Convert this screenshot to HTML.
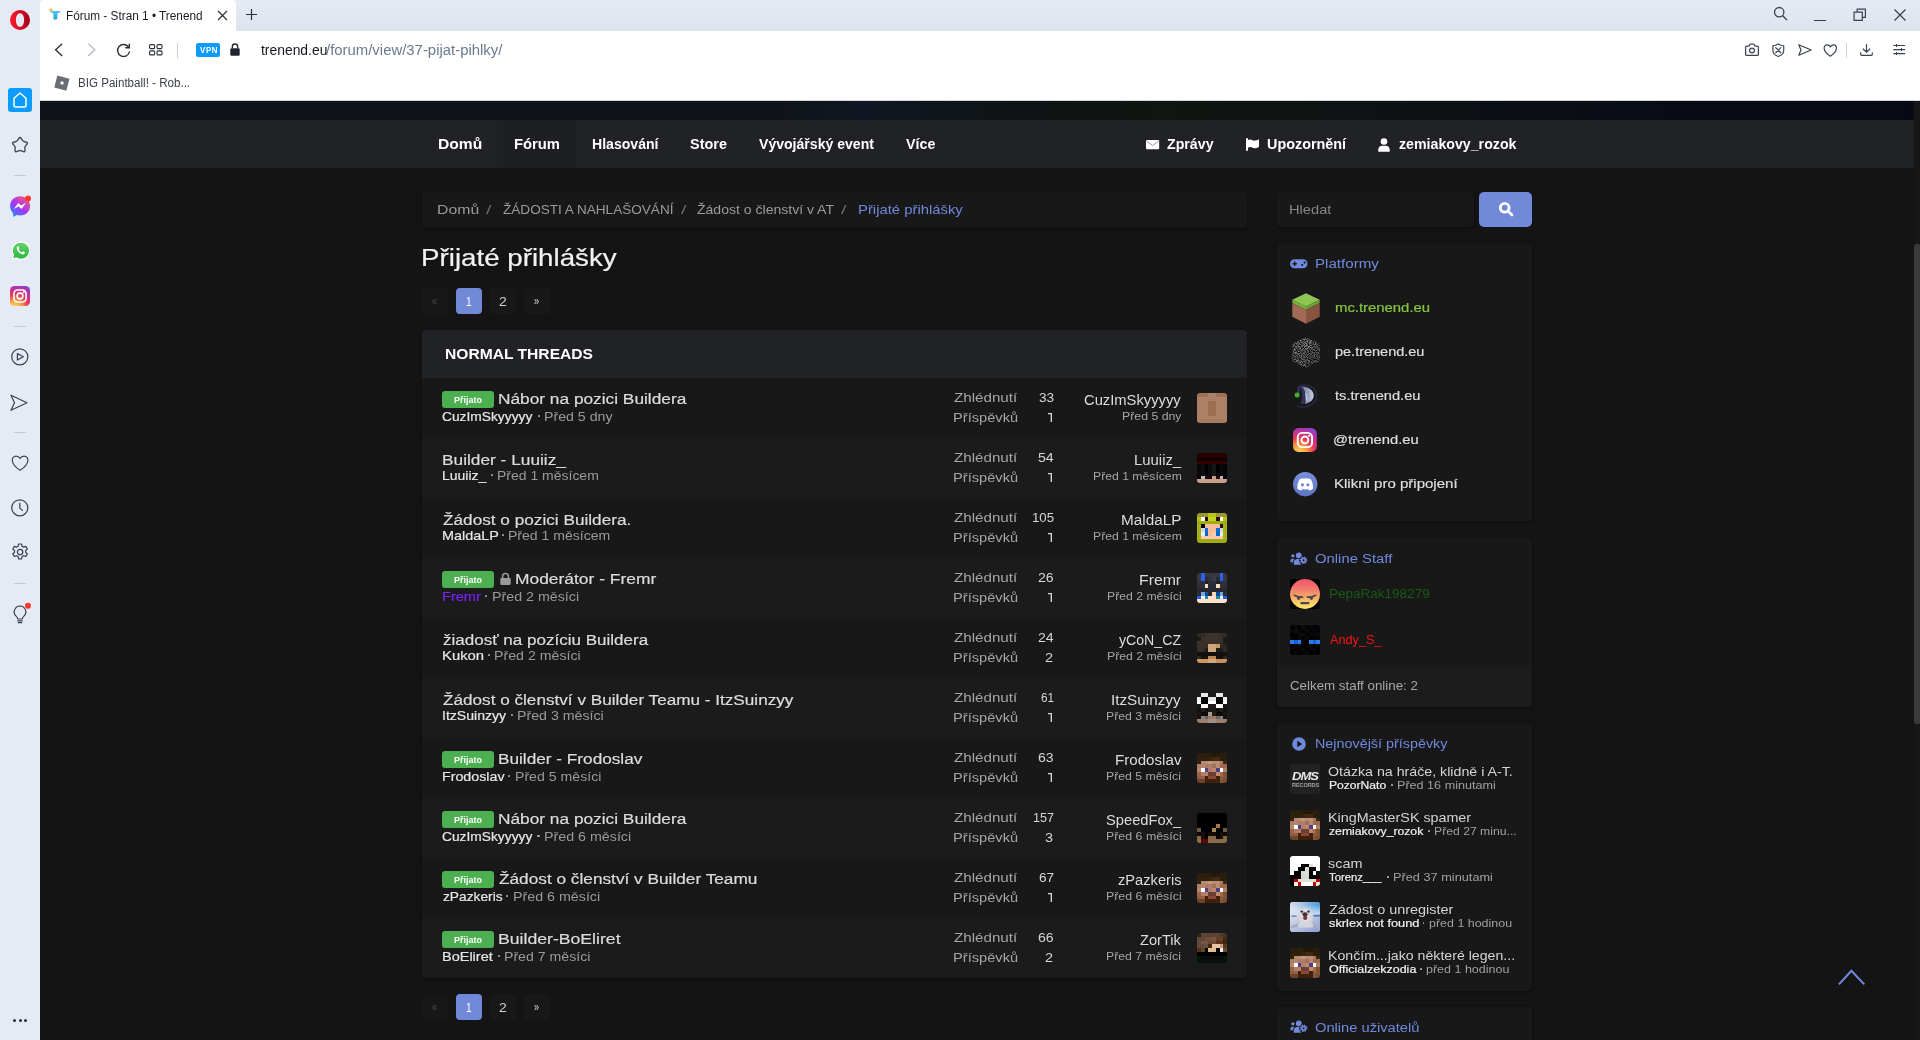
<!DOCTYPE html>
<html lang="cs"><head><meta charset="utf-8"><title>Fórum - Stran 1 • Trenend</title>
<style>
html,body{margin:0;padding:0}
body{width:1920px;height:1040px;overflow:hidden;position:relative;background:#141414;font-family:"Liberation Sans",sans-serif}
.a{position:absolute}
.t{position:absolute;white-space:pre;display:block;transform-origin:0 50%}
svg{position:absolute;overflow:visible}
.av{position:absolute;width:30px;height:30px;border-radius:3px;overflow:hidden}
.pg{position:absolute;width:26px;height:26px;border-radius:4px;background:#181818}
.row{position:absolute;left:422px;width:825px;height:60px}
.badge{position:absolute;left:442px;width:52px;height:16.5px;border-radius:3px;background:#4caf50}
.box{position:absolute;left:1277px;width:255px;background:#181818;border-radius:4px;box-shadow:0 1px 3px rgba(0,0,0,.4)}

</style></head>
<body>
<div class="a" style="left:0;top:0;width:1920px;height:31px;background:linear-gradient(#e4ebf4,#dde4ee)"></div>
<div class="a" style="left:40px;top:31px;width:1880px;height:69px;background:#fff"></div>
<div class="a" style="left:40px;top:100px;width:1880px;height:1px;background:#cfd6e0"></div>
<div class="a" style="left:0;top:0;width:40px;height:1040px;background:#e4ebf5"></div>
<div class="a" style="left:40px;top:0;width:196px;height:31px;background:#fff;border-radius:4px 4px 0 0"></div>
<svg style="left:10px;top:10px" width="20" height="20" viewBox="0 0 20 20"><defs><linearGradient id="og" x1="0" y1="0" x2="1" y2="0"><stop offset="0" stop-color="#ff1b2d"/><stop offset="1" stop-color="#a70014"/></linearGradient></defs><path fill-rule="evenodd" fill="url(#og)" d="M10 0a10 10 0 1 0 0 20a10 10 0 1 0 0-20zM10 3.2c2.6 0 4.1 3 4.1 6.8s-1.5 6.8-4.1 6.8s-4.1-3-4.1-6.8s1.500-6.800 4.100-6.800z"/></svg>
<svg style="left:48px;top:8px" width="14" height="13" viewBox="0 0 14 13"><defs><linearGradient id="fv" x1="0" y1="0" x2="0" y2="1"><stop offset="0" stop-color="#4fc6f5"/><stop offset="1" stop-color="#2b9fd8"/></linearGradient></defs><path d="M1.600 3.100L12.800 2.900C11.800 4.300 10.600 5.100 9.400 5.300L9.300 11.100L7.300 11.800L5.400 11V5.400C4 5.200 2.600 4.400 1.600 3.100z" fill="url(#fv)"/><circle cx="3" cy="1.900" r="1.700" fill="#fbb452" opacity=".92"/></svg>
<svg style="left:217px;top:10px" width="11" height="11" viewBox="0 0 11 11"><path d="M1 1l9 9M10 1l-9 9" stroke="#2b303b" stroke-width="1.2" fill="none"/></svg>
<svg style="left:246px;top:9px" width="11" height="11" viewBox="0 0 11 11"><path d="M5.500 0v11M0 5.500h11" stroke="#2b303b" stroke-width="1.2" fill="none"/></svg>
<svg style="left:1773px;top:6px" width="16" height="16" viewBox="0 0 16 16"><circle cx="6.200" cy="6.200" r="4.700" stroke="#3b4250" stroke-width="1.300" fill="none"/><path d="M9.700 9.700l4.300 4.300" stroke="#3b4250" stroke-width="1.300"/></svg>
<div class="a" style="left:1814px;top:19.500px;width:12px;height:1.300px;background:#3b4250"></div>
<svg style="left:1853px;top:8px" width="14" height="14" viewBox="0 0 14 14"><path d="M1.100 4.200h8.200v8.200h-8.200zM4.200 4v-2.900h8.200v8.200h-2.900" stroke="#3b4250" stroke-width="1.200" fill="none"/></svg>
<svg style="left:1894px;top:9px" width="12" height="12" viewBox="0 0 12 12"><path d="M0.500 0.500l11 11M11.500 0.500l-11 11" stroke="#3b4250" stroke-width="1.300" fill="none"/></svg>
<svg style="left:54px;top:43px" width="10" height="14" viewBox="0 0 10 14"><path d="M8.200 0.700l-6.600 6.100l6.600 6.100" stroke="#2b303b" stroke-width="1.400" fill="none"/></svg>
<svg style="left:87px;top:43px" width="10" height="14" viewBox="0 0 10 14"><path d="M1.200 0.700l6.600 6.100l-6.600 6.100" stroke="#b9bec8" stroke-width="1.400" fill="none"/></svg>
<svg style="left:116px;top:43px" width="15" height="15" viewBox="0 0 15 15"><path d="M12.600 4.200A6 6 0 1 0 13.500 8.500" stroke="#2b303b" stroke-width="1.400" fill="none"/><path d="M13.300 0.800v4h-4" stroke="#2b303b" stroke-width="1.400" fill="none"/></svg>
<svg style="left:148.500px;top:44px" width="14" height="12" viewBox="0 0 14 12"><g stroke="#2b303b" stroke-width="1.100" fill="none"><rect x="0.600" y="0.600" width="5" height="4" rx="1"/><rect x="8" y="0.600" width="5" height="4" rx="1"/><rect x="0.600" y="6.900" width="5" height="4" rx="1"/><rect x="8" y="6.900" width="5" height="4" rx="1"/></g></svg>
<div class="a" style="left:177px;top:43px;width:1px;height:15px;background:#c9ced6"></div>
<div class="a" style="left:196px;top:43px;width:24px;height:14px;background:#0c9bff;border-radius:2px"></div>
<svg style="left:230px;top:43px" width="10" height="13" viewBox="0 0 10 13"><path d="M2.300 5.500v-1.800a2.700 2.700 0 0 1 5.400 0v1.800" stroke="#20242e" stroke-width="1.300" fill="none"/><rect x="0.300" y="5.300" width="9.400" height="7.400" rx="1.200" fill="#20242e"/></svg>
<svg style="left:1744.800px;top:43px" width="14" height="13" viewBox="0 0 14 13"><path d="M1.600 3.200h2.300l1-1.600c.2-.3.400-.4.700-.4h2.800c.3 0 .5.100.7.400l1 1.600h2.300c.6 0 1 .4 1 1v7.200c0 .6-.4 1-1 1h-10.800c-.6 0-1-.4-1-1v-7.200c0-.6.400-1 1-1z" stroke="#3b4250" stroke-width="1.200" fill="none" stroke-linejoin="round" stroke-linecap="round"/><circle cx="7" cy="7.500" r="2.400" stroke="#3b4250" stroke-width="1.200" fill="none" stroke-linejoin="round" stroke-linecap="round"/></svg>
<svg style="left:1771.700px;top:42.800px" width="12.600" height="14.400" viewBox="0 0 13 14.400"><path d="M6.500 0.700c1.600 1 3.600 1.700 5.600 1.900v4.800c0 3-2.300 5-5.600 6.300c-3.300-1.300-5.600-3.300-5.600-6.300v-4.800c2-.2 4-.9 5.600-1.900z" stroke="#3b4250" stroke-width="1.200" fill="none" stroke-linejoin="round" stroke-linecap="round"/><path d="M3.900 4.600l5.200 5.200M9.100 4.600l-5.200 5.200" stroke="#3b4250" stroke-width="1.200" fill="none" stroke-linejoin="round" stroke-linecap="round"/></svg>
<svg style="left:1797.500px;top:44px" width="14" height="12" viewBox="0 0 14 12"><path d="M0.800 0.800l12.400 5.200l-12.400 5.200l2.200-5.200z" stroke="#3b4250" stroke-width="1.200" fill="none" stroke-linejoin="round" stroke-linecap="round"/></svg>
<svg style="left:1822.700px;top:44px" width="14.600" height="13" viewBox="0 0 14.600 13"><path d="M7.300 12.200c-8.400-5.200-6.900-11.400-3.200-11.400c1.500 0 2.600 1 3.200 2.100c.6-1.100 1.700-2.100 3.200-2.100c3.700 0 5.200 6.200-3.200 11.400z" stroke="#3b4250" stroke-width="1.200" fill="none" stroke-linejoin="round" stroke-linecap="round"/></svg>
<div class="a" style="left:1846px;top:43px;width:1px;height:15px;background:#cfd2d6"></div>
<svg style="left:1860px;top:44px" width="13" height="12" viewBox="0 0 13 12"><path d="M6.500 0.500v7.700M3.200 5l3.300 3.200l3.300-3.200M0.700 8.800v1.500c0 .6.400 1 1 1h9.600c.6 0 1-.4 1-1v-1.500" stroke="#3b4250" stroke-width="1.200" fill="none" stroke-linejoin="round" stroke-linecap="round"/></svg>
<svg style="left:1893px;top:43px" width="13" height="13" viewBox="0 0 13 13"><path d="M0.300 2.500h11.800M0.300 6.600h11.800M0.300 10.600h11.800M3.500 1v3M8.500 5.100v3M3.500 9.100v3" stroke="#3b4250" stroke-width="1.050" fill="none"/></svg>
<svg style="left:54px;top:75px" width="16" height="16" viewBox="0 0 16 16"><path d="M3.300 0.500l12.200 3.200l-3.200 12l-12-3.200z" fill="#6b6e74"/><path d="M7 6.200l2.800.7l-.7 2.800l-2.800-.7z" fill="#fff"/></svg>
<div class="a" style="left:8px;top:88px;width:24px;height:24px;background:#0c9bff;border-radius:3px"></div>
<svg style="left:13px;top:92px" width="14" height="16" viewBox="0 0 14 16"><path d="M1 6.200l6-5.200l6 5.200v7.300a1.500 1.500 0 0 1-1.500 1.500h-9a1.500 1.500 0 0 1-1.500-1.500z" stroke="#fff" stroke-width="1.500" fill="none" stroke-linejoin="round"/></svg>
<svg style="left:10.900px;top:135.700px" width="18" height="18" viewBox="0 0 18 18"><path d="M7.69 2.65Q9.00 0.40 10.31 2.65L11.07 3.95Q11.88 5.34 13.44 5.68L14.92 6.00Q17.46 6.55 15.73 8.49L14.73 9.62Q13.66 10.81 13.82 12.41L13.97 13.91Q14.23 16.50 11.85 15.45L10.46 14.84Q9.00 14.20 7.54 14.84L6.15 15.45Q3.77 16.50 4.03 13.91L4.18 12.41Q4.34 10.81 3.27 9.62L2.27 8.49Q0.54 6.55 3.08 6.00L4.56 5.68Q6.12 5.34 6.93 3.95z" stroke="#474e5a" stroke-width="1.450" fill="none" stroke-linejoin="round"/></svg>
<div class="a" style="left:14px;top:175px;width:12px;height:1px;background:#c3cad4"></div>
<div class="a" style="left:14px;top:326px;width:12px;height:1px;background:#c3cad4"></div>
<div class="a" style="left:14px;top:432px;width:12px;height:1px;background:#c3cad4"></div>
<div class="a" style="left:14px;top:583px;width:12px;height:1px;background:#c3cad4"></div>
<svg style="left:10px;top:194.500px" width="21" height="22.500" viewBox="0 0 21 22.500"><defs><linearGradient id="mg" x1="0.150" y1="1" x2="0.900" y2="0"><stop offset="0" stop-color="#1a8cff"/><stop offset=".45" stop-color="#a436f5"/><stop offset="1" stop-color="#ff5c72"/></linearGradient></defs><path d="M10.100 1.300c-5.700 0-10 4.200-10 9.800c0 2.900 1.200 5.400 3.100 7.100v3.800l3.400-1.900c1.100.3 2.300.5 3.500.5c5.700 0 10-4.200 10-9.500s-4.300-9.800-10-9.800z" fill="url(#mg)"/><path d="M3.900 14l4.300-6.100l3 2.500l4.800-2.700l-4.400 6.200l-3-2.500z" fill="#fff"/><circle cx="18" cy="3.500" r="3" fill="#ff3529"/></svg>
<svg style="left:10.500px;top:241.300px" width="19.500" height="19.500" viewBox="0 0 19 19"><defs><linearGradient id="wg" x1="0" y1="0" x2="0" y2="1"><stop offset="0" stop-color="#62d26b"/><stop offset="1" stop-color="#2cb741"/></linearGradient></defs><path d="M9.600 0.500a8.900 8.900 0 0 0-7.700 13.400l-1.400 4.600l4.800-1.300a8.900 8.900 0 1 0 4.300-16.700z" fill="#fff"/><path d="M9.600 1.600a7.800 7.800 0 0 0-6.500 12.100l-.9 3l3.100-.9a7.800 7.800 0 1 0 4.300-14.200z" fill="url(#wg)"/><path d="M6.600 5.200c.3-.3.900-.2 1 .2l.6 1.500c.1.300 0 .5-.2.700l-.5.600c.7 1.300 1.600 2.200 3 2.900l.7-.7c.2-.2.500-.2.700-.1l1.400.7c.4.200.4.700.2 1c-.6 1-1.700 1.300-2.800.9c-2.400-.8-4.200-2.600-5-5c-.3-1 0-2 .9-2.700z" fill="#fff"/></svg>
<svg style="left:10px;top:286px" width="20" height="20" viewBox="0 0 20 20"><defs><radialGradient id="iga" cx="0.250" cy="1.050" r="1.300"><stop offset="0" stop-color="#ffd676"/><stop offset=".25" stop-color="#f7a23c"/><stop offset=".5" stop-color="#e8365a"/><stop offset=".75" stop-color="#b832a8"/><stop offset="1" stop-color="#5b4fe0"/></radialGradient></defs><rect width="20" height="20" rx="4.500" fill="url(#iga)"/><rect x="4" y="4" width="12" height="12" rx="3.500" stroke="#fff" stroke-width="1.600" fill="none"/><circle cx="10" cy="10" r="2.900" stroke="#fff" stroke-width="1.600" fill="none"/><circle cx="13.700" cy="6.300" r="1" fill="#fff"/></svg>
<svg style="left:10.600px;top:347.600px" width="17.600" height="17.600" viewBox="0 0 17 17"><circle cx="8.500" cy="8.500" r="7.750" stroke="#3b4250" stroke-width="1.200" fill="none" stroke-linejoin="round" stroke-linecap="round" stroke-width="1.300"/><path d="M6.200 5.400l5.700 3.100l-5.700 3.100z" stroke="#3b4250" stroke-width="1.200" fill="none" stroke-linejoin="round" stroke-linecap="round" stroke-width="1.300"/></svg>
<svg style="left:10.400px;top:393.500px" width="18" height="17.600" viewBox="0 0 18 17"><path d="M1 1l16 7.500l-16 7.500l3.500-7.500z" stroke="#3b4250" stroke-width="1.200" fill="none" stroke-linejoin="round" stroke-linecap="round" stroke-width="1.300"/></svg>
<svg style="left:10.500px;top:454.800px" width="18.200" height="16.200" viewBox="0 0 18 16"><path d="M9 15c-10.500-6.300-8.700-14-4-14c2 0 3.300 1.200 4 2.500c.7-1.300 2-2.500 4-2.500c4.700 0 6.500 7.700-4 14z" stroke="#3b4250" stroke-width="1.200" fill="none" stroke-linejoin="round" stroke-linecap="round" stroke-width="1.300"/></svg>
<svg style="left:10.700px;top:498.800px" width="17.600" height="17.600" viewBox="0 0 17 17"><circle cx="8.500" cy="8.500" r="7.750" stroke="#3b4250" stroke-width="1.200" fill="none" stroke-linejoin="round" stroke-linecap="round" stroke-width="1.300"/><path d="M8.500 4v4.800l2.500 2.200" stroke="#3b4250" stroke-width="1.200" fill="none" stroke-linejoin="round" stroke-linecap="round" stroke-width="1.300"/></svg>
<svg style="left:10.500px;top:543.300px" width="18.200" height="18.200" viewBox="0 0 18 18"><path d="M7.500 1h3l.5 2.300l1.500.8l2.200-.8l1.500 2.600l-1.700 1.600v1.700l1.700 1.600l-1.500 2.600l-2.200-.8l-1.500.8l-.5 2.300h-3l-.5-2.300l-1.500-.8l-2.200.8l-1.500-2.600l1.700-1.600v-1.700l-1.700-1.600l1.500-2.600l2.200.8l1.500-.8z" stroke="#3b4250" stroke-width="1.200" fill="none" stroke-linejoin="round" stroke-linecap="round" stroke-width="1.250"/><circle cx="9" cy="9" r="2.700" stroke="#3b4250" stroke-width="1.200" fill="none" stroke-linejoin="round" stroke-linecap="round" stroke-width="1.250"/></svg>
<svg style="left:12.700px;top:602px" width="19" height="23" viewBox="0 0 19 23"><path d="M7 4a5.900 5.900 0 0 0-3.700 10.400c.9.800 1.400 1.700 1.400 2.600h4.600c0-.9.500-1.800 1.400-2.600a5.900 5.900 0 0 0-3.700-10.400z" stroke="#3b4250" stroke-width="1.200" fill="none" stroke-linejoin="round" stroke-linecap="round" stroke-width="1.300"/><path d="M4.800 18.900h4.400M5.300 20.700h3.400" stroke="#3b4250" stroke-width="1.200" fill="none" stroke-linejoin="round" stroke-linecap="round" stroke-width="1.300"/><circle cx="15" cy="3.800" r="3" fill="#ff3529"/></svg>
<div class="a" style="left:12.6px;top:1018.500px;width:3px;height:3px;border-radius:2px;background:#2b303b"></div>
<div class="a" style="left:18.5px;top:1018.500px;width:3px;height:3px;border-radius:2px;background:#2b303b"></div>
<div class="a" style="left:24.4px;top:1018.500px;width:3px;height:3px;border-radius:2px;background:#2b303b"></div>
<div class="a" style="left:40px;top:101px;width:1874px;height:19px;background:linear-gradient(90deg,#0f1216 0%,#0f1216 38%,#101722 44%,#0f1314 52%,#101511 60%,#0d1114 75%,#090c15 85%,#070a15 100%)"></div>
<div class="a" style="left:40px;top:120px;width:1874px;height:48px;background:#212226"></div>
<div class="a" style="left:497px;top:120px;width:79px;height:48px;background:#1e1f23"></div>
<div class="a" style="left:1914px;top:101px;width:6px;height:939px;background:#161616"></div>
<div class="a" style="left:1914px;top:244px;width:7px;height:480px;background:#3a3a3a;border-radius:3px"></div>
<svg style="left:1145.500px;top:140px" width="13.200" height="9.200" viewBox="0 0 13.200 9.200"><rect width="13.200" height="9.200" rx="1" fill="#fff"/><path d="M0.600 1.200l6 4.300l6-4.300" stroke="#6a6470" stroke-width=".7" fill="none"/></svg>
<svg style="left:1245.700px;top:138.200px" width="13" height="13" viewBox="0 0 13 13"><path d="M0 1.100a1 1 0 0 1 2 0v11.700h-2z" fill="#fff"/><path d="M1.800 2.300c1.800-1.100 3.200-.7 4.700-.1s3 .8 6.500-.9v7.600c-3.300 1.600-4.900 1.400-6.400.8s-2.900-1-4.800 0z" fill="#fff"/></svg>
<svg style="left:1378px;top:137.500px" width="12" height="14" viewBox="0 0 12 14"><circle cx="6" cy="3.500" r="3.300" fill="#fff"/><path d="M0.300 13.700v-2.200c0-2.300 1.800-3.800 3.700-3.800h4c1.900 0 3.700 1.500 3.700 3.800v2.200z" fill="#fff"/></svg>
<div class="a" style="left:422px;top:192px;width:825px;height:36px;background:#181818;border-radius:4px;box-shadow:0 1px 3px rgba(0,0,0,.4)"></div>
<div class="pg" style="left:422px;top:288px;background:#171717"></div>
<div class="pg" style="left:456px;top:288px;background:#7289da"></div>
<div class="pg" style="left:490px;top:288px;background:#181818"></div>
<div class="pg" style="left:524px;top:288px;background:#181818"></div>
<div class="pg" style="left:422px;top:994px;background:#171717"></div>
<div class="pg" style="left:456px;top:994px;background:#7289da"></div>
<div class="pg" style="left:490px;top:994px;background:#181818"></div>
<div class="pg" style="left:524px;top:994px;background:#181818"></div>
<div class="a" style="left:422px;top:330px;width:825px;height:648px;border-radius:4px;box-shadow:0 1px 3px rgba(0,0,0,.4)"></div>
<div class="a" style="left:422px;top:330px;width:825px;height:48px;background:#212226;border-radius:4px 4px 0 0"></div>
<div class="row" style="top:378px;background:#181818"></div>
<div class="badge" style="top:391.2px"></div>
<div class="a" style="left:537.5px;top:415.2px;width:2.3px;height:2.3px;background:#9a9a9a;border-radius:.6px"></div>
<svg style="left:1048.400px;top:413px" width="4" height="9" viewBox="0 0 4 9"><path d="M0 0h4v9h-1.350v-7.800h-2.650z" fill="#d6d6d6"/></svg>
<div class="av" style="left:1197px;top:393px"><svg style="left:0;top:0" width="30" height="30" viewBox="0 0 8 8" shape-rendering="crispEdges" preserveAspectRatio="none"><rect x="0" y="0" width="3" height="1" fill="#a27052"/><rect x="3" y="0" width="2" height="1" fill="#ae8268"/><rect x="5" y="0" width="3" height="1" fill="#a27052"/><rect x="0" y="1" width="8" height="1" fill="#ab8066"/><rect x="0" y="2" width="3" height="1" fill="#ab8066"/><rect x="3" y="2" width="2" height="1" fill="#9e6e52"/><rect x="5" y="2" width="3" height="1" fill="#ab8066"/><rect x="0" y="3" width="3" height="1" fill="#ab8066"/><rect x="3" y="3" width="2" height="1" fill="#9e6e52"/><rect x="5" y="3" width="3" height="1" fill="#ab8066"/><rect x="0" y="4" width="3" height="1" fill="#ab8066"/><rect x="3" y="4" width="2" height="1" fill="#9e6e52"/><rect x="5" y="4" width="3" height="1" fill="#ab8066"/><rect x="0" y="5" width="3" height="1" fill="#ab8066"/><rect x="3" y="5" width="2" height="1" fill="#9e6e52"/><rect x="5" y="5" width="3" height="1" fill="#ab8066"/><rect x="0" y="6" width="8" height="1" fill="#ab8066"/><rect x="0" y="7" width="8" height="1" fill="#a87a5e"/></svg></div>
<div class="row" style="top:438px;background:#1b1b1b"></div>
<div class="a" style="left:490.8px;top:474.2px;width:2.3px;height:2.3px;background:#9a9a9a;border-radius:.6px"></div>
<svg style="left:1048.400px;top:473px" width="4" height="9" viewBox="0 0 4 9"><path d="M0 0h4v9h-1.350v-7.800h-2.650z" fill="#d6d6d6"/></svg>
<div class="av" style="left:1197px;top:453px"><svg style="left:0;top:0" width="30" height="30" viewBox="0 0 8 8" shape-rendering="crispEdges" preserveAspectRatio="none"><rect x="0" y="0" width="8" height="1" fill="#2b0000"/><rect x="0" y="1" width="8" height="1" fill="#140000"/><rect x="0" y="2" width="8" height="1" fill="#330000"/><rect x="0" y="3" width="1" height="1" fill="#070707"/><rect x="1" y="3" width="1" height="1" fill="#0c0c0c"/><rect x="2" y="3" width="1" height="1" fill="#000000"/><rect x="3" y="3" width="1" height="1" fill="#0a0a0a"/><rect x="4" y="3" width="1" height="1" fill="#151515"/><rect x="5" y="3" width="1" height="1" fill="#000000"/><rect x="6" y="3" width="1" height="1" fill="#0a0a0a"/><rect x="7" y="3" width="1" height="1" fill="#050505"/><rect x="0" y="4" width="1" height="1" fill="#070707"/><rect x="1" y="4" width="1" height="1" fill="#0c0c0c"/><rect x="2" y="4" width="1" height="1" fill="#000000"/><rect x="3" y="4" width="1" height="1" fill="#0a0a0a"/><rect x="4" y="4" width="1" height="1" fill="#151515"/><rect x="5" y="4" width="1" height="1" fill="#000000"/><rect x="6" y="4" width="1" height="1" fill="#0a0a0a"/><rect x="7" y="4" width="1" height="1" fill="#050505"/><rect x="0" y="5" width="1" height="1" fill="#070707"/><rect x="1" y="5" width="1" height="1" fill="#0c0c0c"/><rect x="2" y="5" width="1" height="1" fill="#000000"/><rect x="3" y="5" width="1" height="1" fill="#0a0a0a"/><rect x="4" y="5" width="1" height="1" fill="#151515"/><rect x="5" y="5" width="1" height="1" fill="#000000"/><rect x="6" y="5" width="1" height="1" fill="#0a0a0a"/><rect x="7" y="5" width="1" height="1" fill="#050505"/><rect x="0" y="6" width="1" height="1" fill="#070707"/><rect x="1" y="6" width="1" height="1" fill="#b8bcc0"/><rect x="2" y="6" width="1" height="1" fill="#2a0008"/><rect x="3" y="6" width="1" height="1" fill="#0a0a0a"/><rect x="4" y="6" width="1" height="1" fill="#c49c84"/><rect x="5" y="6" width="1" height="1" fill="#2a0008"/><rect x="6" y="6" width="1" height="1" fill="#b8bcc0"/><rect x="7" y="6" width="1" height="1" fill="#050505"/><rect x="0" y="7" width="8" height="1" fill="#c8a088"/></svg></div>
<div class="row" style="top:498px;background:#181818"></div>
<div class="a" style="left:501.7px;top:534.2px;width:2.3px;height:2.3px;background:#9a9a9a;border-radius:.6px"></div>
<svg style="left:1048.400px;top:533px" width="4" height="9" viewBox="0 0 4 9"><path d="M0 0h4v9h-1.350v-7.800h-2.650z" fill="#d6d6d6"/></svg>
<div class="av" style="left:1197px;top:513px"><svg style="left:0;top:0" width="30" height="30" viewBox="0 0 8 8" shape-rendering="crispEdges" preserveAspectRatio="none"><rect x="0" y="0" width="3" height="1" fill="#9a9a30"/><rect x="3" y="0" width="2" height="1" fill="#b8c41c"/><rect x="5" y="0" width="3" height="1" fill="#9a9a30"/><rect x="0" y="1" width="1" height="1" fill="#b4c018"/><rect x="1" y="1" width="1" height="1" fill="#ffffff"/><rect x="2" y="1" width="1" height="1" fill="#2a0800"/><rect x="3" y="1" width="2" height="1" fill="#c4d420"/><rect x="5" y="1" width="1" height="1" fill="#2a0800"/><rect x="6" y="1" width="1" height="1" fill="#ffffff"/><rect x="7" y="1" width="1" height="1" fill="#b4c018"/><rect x="0" y="2" width="8" height="1" fill="#a0ac14"/><rect x="0" y="3" width="1" height="1" fill="#a4b016"/><rect x="1" y="3" width="1" height="1" fill="#000000"/><rect x="2" y="3" width="4" height="1" fill="#fcbc98"/><rect x="6" y="3" width="1" height="1" fill="#1e1414"/><rect x="7" y="3" width="1" height="1" fill="#a4b016"/><rect x="0" y="4" width="1" height="1" fill="#a4b016"/><rect x="1" y="4" width="1" height="1" fill="#d8d8dc"/><rect x="2" y="4" width="1" height="1" fill="#0a70d8"/><rect x="3" y="4" width="2" height="1" fill="#fcbc98"/><rect x="5" y="4" width="1" height="1" fill="#0a70d8"/><rect x="6" y="4" width="1" height="1" fill="#d8d8dc"/><rect x="7" y="4" width="1" height="1" fill="#a4b016"/><rect x="0" y="5" width="1" height="1" fill="#a4b016"/><rect x="1" y="5" width="1" height="1" fill="#ececf0"/><rect x="2" y="5" width="1" height="1" fill="#0a68cc"/><rect x="3" y="5" width="1" height="1" fill="#fcbc98"/><rect x="4" y="5" width="1" height="1" fill="#f8ccb0"/><rect x="5" y="5" width="1" height="1" fill="#0a68cc"/><rect x="6" y="5" width="1" height="1" fill="#ececf0"/><rect x="7" y="5" width="1" height="1" fill="#a4b016"/><rect x="0" y="6" width="1" height="1" fill="#a4b016"/><rect x="1" y="6" width="6" height="1" fill="#f8c8b0"/><rect x="7" y="6" width="1" height="1" fill="#a4b016"/><rect x="0" y="7" width="8" height="1" fill="#a0ac14"/></svg></div>
<div class="row" style="top:558px;background:#1b1b1b"></div>
<div class="badge" style="top:571.2px"></div>
<svg style="left:499.500px;top:572.5px" width="11" height="12" viewBox="0 0 11 12"><path d="M2.600 5v-1.600a2.900 2.900 0 0 1 5.800 0v1.600" stroke="#9a9a9a" stroke-width="1.500" fill="none"/><rect x="0.300" y="5" width="10.400" height="7" rx="1.200" fill="#9a9a9a"/></svg>
<div class="a" style="left:485.0px;top:595.2px;width:2.3px;height:2.3px;background:#9a9a9a;border-radius:.6px"></div>
<svg style="left:1048.400px;top:593px" width="4" height="9" viewBox="0 0 4 9"><path d="M0 0h4v9h-1.350v-7.800h-2.650z" fill="#d6d6d6"/></svg>
<div class="av" style="left:1197px;top:573px"><svg style="left:0;top:0" width="30" height="30" viewBox="0 0 8 8" shape-rendering="crispEdges" preserveAspectRatio="none"><rect x="0" y="0" width="1" height="1" fill="#38383e"/><rect x="1" y="0" width="1" height="1" fill="#2860f0"/><rect x="2" y="0" width="4" height="1" fill="#38363e"/><rect x="6" y="0" width="1" height="1" fill="#2860f0"/><rect x="7" y="0" width="1" height="1" fill="#38383e"/><rect x="0" y="1" width="1" height="1" fill="#36383f"/><rect x="1" y="1" width="1" height="1" fill="#2860f0"/><rect x="2" y="1" width="1" height="1" fill="#2a2a36"/><rect x="3" y="1" width="1" height="1" fill="#30323c"/><rect x="4" y="1" width="1" height="1" fill="#383c44"/><rect x="5" y="1" width="1" height="1" fill="#2a2a36"/><rect x="6" y="1" width="1" height="1" fill="#2860f0"/><rect x="7" y="1" width="1" height="1" fill="#383a42"/><rect x="0" y="2" width="2" height="1" fill="#2c2e3a"/><rect x="2" y="2" width="1" height="1" fill="#22222e"/><rect x="3" y="2" width="2" height="1" fill="#2c2e3a"/><rect x="5" y="2" width="1" height="1" fill="#22222e"/><rect x="6" y="2" width="2" height="1" fill="#2c2e3a"/><rect x="0" y="3" width="2" height="1" fill="#2c2e3a"/><rect x="2" y="3" width="1" height="1" fill="#fcdcc0"/><rect x="3" y="3" width="2" height="1" fill="#2a2c38"/><rect x="5" y="3" width="1" height="1" fill="#fcdcc0"/><rect x="6" y="3" width="2" height="1" fill="#2c2e3a"/><rect x="0" y="4" width="8" height="1" fill="#262832"/><rect x="0" y="5" width="1" height="1" fill="#2a2c38"/><rect x="1" y="5" width="1" height="1" fill="#78a8d8"/><rect x="2" y="5" width="1" height="1" fill="#0c4ca0"/><rect x="3" y="5" width="1" height="1" fill="#242630"/><rect x="4" y="5" width="1" height="1" fill="#f8d4b8"/><rect x="5" y="5" width="1" height="1" fill="#0c4ca0"/><rect x="6" y="5" width="1" height="1" fill="#78a8d8"/><rect x="7" y="5" width="1" height="1" fill="#2a2c38"/><rect x="0" y="6" width="1" height="1" fill="#2858f0"/><rect x="1" y="6" width="1" height="1" fill="#f8f8ff"/><rect x="2" y="6" width="1" height="1" fill="#0890a8"/><rect x="3" y="6" width="2" height="1" fill="#fce0c8"/><rect x="5" y="6" width="1" height="1" fill="#0890a8"/><rect x="6" y="6" width="1" height="1" fill="#f8f8ff"/><rect x="7" y="6" width="1" height="1" fill="#2858f0"/><rect x="0" y="7" width="8" height="1" fill="#fce0c8"/></svg></div>
<div class="row" style="top:618px;background:#181818"></div>
<div class="a" style="left:487.8px;top:654.2px;width:2.3px;height:2.3px;background:#9a9a9a;border-radius:.6px"></div>
<div class="av" style="left:1197px;top:633px"><svg style="left:0;top:0" width="30" height="30" viewBox="0 0 8 8" shape-rendering="crispEdges" preserveAspectRatio="none"><rect x="0" y="0" width="2" height="1" fill="#302a24"/><rect x="2" y="0" width="4" height="1" fill="#3c322c"/><rect x="6" y="0" width="2" height="1" fill="#342c26"/><rect x="0" y="1" width="1" height="1" fill="#1e1a16"/><rect x="1" y="1" width="6" height="1" fill="#3c322c"/><rect x="7" y="1" width="1" height="1" fill="#1e1a18"/><rect x="0" y="2" width="1" height="1" fill="#3a322c"/><rect x="1" y="2" width="6" height="1" fill="#3a302a"/><rect x="7" y="2" width="1" height="1" fill="#1e1a18"/><rect x="0" y="3" width="3" height="1" fill="#3a302a"/><rect x="3" y="3" width="2" height="1" fill="#cfa57a"/><rect x="5" y="3" width="1" height="1" fill="#c89860"/><rect x="6" y="3" width="2" height="1" fill="#2a2622"/><rect x="0" y="4" width="2" height="1" fill="#362e28"/><rect x="2" y="4" width="1" height="1" fill="#1c1c1c"/><rect x="3" y="4" width="2" height="1" fill="#cfa57a"/><rect x="5" y="4" width="2" height="1" fill="#1c1c1c"/><rect x="7" y="4" width="1" height="1" fill="#2e2824"/><rect x="0" y="5" width="8" height="1" fill="#14100e"/><rect x="0" y="6" width="1" height="1" fill="#2a2622"/><rect x="1" y="6" width="2" height="1" fill="#14100e"/><rect x="3" y="6" width="2" height="1" fill="#c08850"/><rect x="5" y="6" width="2" height="1" fill="#14100e"/><rect x="7" y="6" width="1" height="1" fill="#2a2622"/><rect x="0" y="7" width="3" height="1" fill="#cc9860"/><rect x="3" y="7" width="2" height="1" fill="#d0a880"/><rect x="5" y="7" width="3" height="1" fill="#c89060"/></svg></div>
<div class="row" style="top:678px;background:#1b1b1b"></div>
<div class="a" style="left:510.5px;top:714.2px;width:2.3px;height:2.3px;background:#9a9a9a;border-radius:.6px"></div>
<svg style="left:1048.400px;top:713px" width="4" height="9" viewBox="0 0 4 9"><path d="M0 0h4v9h-1.350v-7.800h-2.650z" fill="#d6d6d6"/></svg>
<div class="av" style="left:1197px;top:693px"><svg style="left:0;top:0" width="30" height="30" viewBox="0 0 8 8" shape-rendering="crispEdges" preserveAspectRatio="none"><rect x="0" y="0" width="1" height="1" fill="#1a1816"/><rect x="1" y="0" width="2" height="1" fill="#e8e8e8"/><rect x="3" y="0" width="2" height="1" fill="#1a1816"/><rect x="5" y="0" width="2" height="1" fill="#e8e8e8"/><rect x="7" y="0" width="1" height="1" fill="#1a1816"/><rect x="0" y="1" width="1" height="1" fill="#f4f4f4"/><rect x="1" y="1" width="2" height="1" fill="#000000"/><rect x="3" y="1" width="2" height="1" fill="#e4e4e4"/><rect x="5" y="1" width="2" height="1" fill="#000000"/><rect x="7" y="1" width="1" height="1" fill="#f4f4f4"/><rect x="0" y="2" width="1" height="1" fill="#ffffff"/><rect x="1" y="2" width="2" height="1" fill="#000000"/><rect x="3" y="2" width="2" height="1" fill="#ffffff"/><rect x="5" y="2" width="2" height="1" fill="#000000"/><rect x="7" y="2" width="1" height="1" fill="#ffffff"/><rect x="0" y="3" width="1" height="1" fill="#181614"/><rect x="1" y="3" width="2" height="1" fill="#ffffff"/><rect x="3" y="3" width="2" height="1" fill="#1e1a18"/><rect x="5" y="3" width="2" height="1" fill="#ffffff"/><rect x="7" y="3" width="1" height="1" fill="#181614"/><rect x="0" y="4" width="1" height="1" fill="#141210"/><rect x="1" y="4" width="1" height="1" fill="#221c18"/><rect x="2" y="4" width="1" height="1" fill="#141210"/><rect x="3" y="4" width="2" height="1" fill="#1c1816"/><rect x="5" y="4" width="1" height="1" fill="#141210"/><rect x="6" y="4" width="1" height="1" fill="#221c18"/><rect x="7" y="4" width="1" height="1" fill="#141210"/><rect x="0" y="5" width="1" height="1" fill="#181614"/><rect x="1" y="5" width="2" height="1" fill="#0c0a0a"/><rect x="3" y="5" width="1" height="1" fill="#a89890"/><rect x="4" y="5" width="1" height="1" fill="#221c1a"/><rect x="5" y="5" width="2" height="1" fill="#0c0a0a"/><rect x="7" y="5" width="1" height="1" fill="#181614"/><rect x="0" y="6" width="1" height="1" fill="#181614"/><rect x="1" y="6" width="1" height="1" fill="#808484"/><rect x="2" y="6" width="1" height="1" fill="#606464"/><rect x="3" y="6" width="2" height="1" fill="#a07868"/><rect x="5" y="6" width="1" height="1" fill="#606464"/><rect x="6" y="6" width="1" height="1" fill="#808484"/><rect x="7" y="6" width="1" height="1" fill="#181614"/><rect x="0" y="7" width="3" height="1" fill="#a07c6c"/><rect x="3" y="7" width="2" height="1" fill="#a09088"/><rect x="5" y="7" width="3" height="1" fill="#a07c6c"/></svg></div>
<div class="row" style="top:738px;background:#181818"></div>
<div class="badge" style="top:751.2px"></div>
<div class="a" style="left:508.0px;top:775.2px;width:2.3px;height:2.3px;background:#9a9a9a;border-radius:.6px"></div>
<svg style="left:1048.400px;top:773px" width="4" height="9" viewBox="0 0 4 9"><path d="M0 0h4v9h-1.350v-7.800h-2.650z" fill="#d6d6d6"/></svg>
<div class="av" style="left:1197px;top:753px"><svg style="left:0;top:0" width="30" height="30" viewBox="0 0 8 8" shape-rendering="crispEdges" preserveAspectRatio="none"><rect x="0" y="0" width="1" height="1" fill="#2f200d"/><rect x="1" y="0" width="1" height="1" fill="#2b1e0d"/><rect x="2" y="0" width="1" height="1" fill="#2f1f0f"/><rect x="3" y="0" width="1" height="1" fill="#281c0b"/><rect x="4" y="0" width="1" height="1" fill="#241808"/><rect x="5" y="0" width="1" height="1" fill="#261a0a"/><rect x="6" y="0" width="1" height="1" fill="#2b1e0d"/><rect x="7" y="0" width="1" height="1" fill="#2a1d0d"/><rect x="0" y="1" width="3" height="1" fill="#2f200d"/><rect x="3" y="1" width="1" height="1" fill="#332411"/><rect x="4" y="1" width="1" height="1" fill="#422a12"/><rect x="5" y="1" width="1" height="1" fill="#3f2a15"/><rect x="6" y="1" width="1" height="1" fill="#2c1e0e"/><rect x="7" y="1" width="1" height="1" fill="#281c0b"/><rect x="0" y="2" width="1" height="1" fill="#2f200d"/><rect x="1" y="2" width="1" height="1" fill="#b6896c"/><rect x="2" y="2" width="1" height="1" fill="#bd8e72"/><rect x="3" y="2" width="1" height="1" fill="#c69680"/><rect x="4" y="2" width="1" height="1" fill="#bd8b72"/><rect x="5" y="2" width="1" height="1" fill="#bd8e74"/><rect x="6" y="2" width="1" height="1" fill="#ac765a"/><rect x="7" y="2" width="1" height="1" fill="#342512"/><rect x="0" y="3" width="1" height="1" fill="#aa7d66"/><rect x="1" y="3" width="1" height="1" fill="#b4846d"/><rect x="2" y="3" width="1" height="1" fill="#aa7d66"/><rect x="3" y="3" width="1" height="1" fill="#ad806d"/><rect x="4" y="3" width="1" height="1" fill="#9c725c"/><rect x="5" y="3" width="1" height="1" fill="#bb8972"/><rect x="6" y="3" width="2" height="1" fill="#9c694c"/><rect x="0" y="4" width="1" height="1" fill="#b4846d"/><rect x="1" y="4" width="1" height="1" fill="#ffffff"/><rect x="2" y="4" width="1" height="1" fill="#523d89"/><rect x="3" y="4" width="1" height="1" fill="#b57b67"/><rect x="4" y="4" width="1" height="1" fill="#bb8972"/><rect x="5" y="4" width="1" height="1" fill="#523d89"/><rect x="6" y="4" width="1" height="1" fill="#ffffff"/><rect x="7" y="4" width="1" height="1" fill="#aa7d66"/><rect x="0" y="5" width="1" height="1" fill="#9c6346"/><rect x="1" y="5" width="1" height="1" fill="#b37b62"/><rect x="2" y="5" width="1" height="1" fill="#b78272"/><rect x="3" y="5" width="2" height="1" fill="#6a4030"/><rect x="5" y="5" width="1" height="1" fill="#be886c"/><rect x="6" y="5" width="1" height="1" fill="#a26a47"/><rect x="7" y="5" width="1" height="1" fill="#805334"/><rect x="0" y="6" width="1" height="1" fill="#905e43"/><rect x="1" y="6" width="1" height="1" fill="#965f40"/><rect x="2" y="6" width="1" height="1" fill="#40200a"/><rect x="3" y="6" width="2" height="1" fill="#874a3a"/><rect x="5" y="6" width="1" height="1" fill="#40200a"/><rect x="6" y="6" width="1" height="1" fill="#8f5e3e"/><rect x="7" y="6" width="1" height="1" fill="#815339"/><rect x="0" y="7" width="1" height="1" fill="#6f452c"/><rect x="1" y="7" width="1" height="1" fill="#6d432a"/><rect x="2" y="7" width="4" height="1" fill="#40200a"/><rect x="6" y="7" width="1" height="1" fill="#83553b"/><rect x="7" y="7" width="1" height="1" fill="#7a4e33"/></svg></div>
<div class="row" style="top:798px;background:#1b1b1b"></div>
<div class="badge" style="top:811.2px"></div>
<div class="a" style="left:537.4px;top:835.2px;width:2.3px;height:2.3px;background:#9a9a9a;border-radius:.6px"></div>
<div class="av" style="left:1197px;top:813px"><svg style="left:0;top:0" width="30" height="30" viewBox="0 0 8 8" shape-rendering="crispEdges" preserveAspectRatio="none"><rect x="0" y="0" width="8" height="1" fill="#000000"/><rect x="0" y="1" width="8" height="1" fill="#000000"/><rect x="0" y="2" width="8" height="1" fill="#000000"/><rect x="0" y="3" width="5" height="1" fill="#000000"/><rect x="5" y="3" width="1" height="1" fill="#a07848"/><rect x="6" y="3" width="2" height="1" fill="#000000"/><rect x="0" y="4" width="1" height="1" fill="#6a5a44"/><rect x="1" y="4" width="3" height="1" fill="#000000"/><rect x="4" y="4" width="1" height="1" fill="#a88858"/><rect x="5" y="4" width="2" height="1" fill="#000000"/><rect x="7" y="4" width="1" height="1" fill="#6a5a44"/><rect x="0" y="5" width="1" height="1" fill="#0e0806"/><rect x="1" y="5" width="1" height="1" fill="#1a0e0e"/><rect x="2" y="5" width="1" height="1" fill="#000000"/><rect x="3" y="5" width="2" height="1" fill="#140c06"/><rect x="5" y="5" width="1" height="1" fill="#000000"/><rect x="6" y="5" width="1" height="1" fill="#1a0e0e"/><rect x="7" y="5" width="1" height="1" fill="#0e0806"/><rect x="0" y="6" width="1" height="1" fill="#8a6840"/><rect x="1" y="6" width="1" height="1" fill="#1a0e0e"/><rect x="2" y="6" width="1" height="1" fill="#000000"/><rect x="3" y="6" width="2" height="1" fill="#866848"/><rect x="5" y="6" width="1" height="1" fill="#000000"/><rect x="6" y="6" width="1" height="1" fill="#1a0e0e"/><rect x="7" y="6" width="1" height="1" fill="#8a6840"/><rect x="0" y="7" width="1" height="1" fill="#92704a"/><rect x="1" y="7" width="2" height="1" fill="#5a0404"/><rect x="3" y="7" width="5" height="1" fill="#8a6c48"/></svg></div>
<div class="row" style="top:858px;background:#181818"></div>
<div class="badge" style="top:871.2px"></div>
<div class="a" style="left:506.0px;top:895.2px;width:2.3px;height:2.3px;background:#9a9a9a;border-radius:.6px"></div>
<svg style="left:1048.400px;top:893px" width="4" height="9" viewBox="0 0 4 9"><path d="M0 0h4v9h-1.350v-7.800h-2.650z" fill="#d6d6d6"/></svg>
<div class="av" style="left:1197px;top:873px"><svg style="left:0;top:0" width="30" height="30" viewBox="0 0 8 8" shape-rendering="crispEdges" preserveAspectRatio="none"><rect x="0" y="0" width="1" height="1" fill="#2f200d"/><rect x="1" y="0" width="1" height="1" fill="#2b1e0d"/><rect x="2" y="0" width="1" height="1" fill="#2f1f0f"/><rect x="3" y="0" width="1" height="1" fill="#281c0b"/><rect x="4" y="0" width="1" height="1" fill="#241808"/><rect x="5" y="0" width="1" height="1" fill="#261a0a"/><rect x="6" y="0" width="1" height="1" fill="#2b1e0d"/><rect x="7" y="0" width="1" height="1" fill="#2a1d0d"/><rect x="0" y="1" width="3" height="1" fill="#2f200d"/><rect x="3" y="1" width="1" height="1" fill="#332411"/><rect x="4" y="1" width="1" height="1" fill="#422a12"/><rect x="5" y="1" width="1" height="1" fill="#3f2a15"/><rect x="6" y="1" width="1" height="1" fill="#2c1e0e"/><rect x="7" y="1" width="1" height="1" fill="#281c0b"/><rect x="0" y="2" width="1" height="1" fill="#2f200d"/><rect x="1" y="2" width="1" height="1" fill="#b6896c"/><rect x="2" y="2" width="1" height="1" fill="#bd8e72"/><rect x="3" y="2" width="1" height="1" fill="#c69680"/><rect x="4" y="2" width="1" height="1" fill="#bd8b72"/><rect x="5" y="2" width="1" height="1" fill="#bd8e74"/><rect x="6" y="2" width="1" height="1" fill="#ac765a"/><rect x="7" y="2" width="1" height="1" fill="#342512"/><rect x="0" y="3" width="1" height="1" fill="#aa7d66"/><rect x="1" y="3" width="1" height="1" fill="#b4846d"/><rect x="2" y="3" width="1" height="1" fill="#aa7d66"/><rect x="3" y="3" width="1" height="1" fill="#ad806d"/><rect x="4" y="3" width="1" height="1" fill="#9c725c"/><rect x="5" y="3" width="1" height="1" fill="#bb8972"/><rect x="6" y="3" width="2" height="1" fill="#9c694c"/><rect x="0" y="4" width="1" height="1" fill="#b4846d"/><rect x="1" y="4" width="1" height="1" fill="#ffffff"/><rect x="2" y="4" width="1" height="1" fill="#523d89"/><rect x="3" y="4" width="1" height="1" fill="#b57b67"/><rect x="4" y="4" width="1" height="1" fill="#bb8972"/><rect x="5" y="4" width="1" height="1" fill="#523d89"/><rect x="6" y="4" width="1" height="1" fill="#ffffff"/><rect x="7" y="4" width="1" height="1" fill="#aa7d66"/><rect x="0" y="5" width="1" height="1" fill="#9c6346"/><rect x="1" y="5" width="1" height="1" fill="#b37b62"/><rect x="2" y="5" width="1" height="1" fill="#b78272"/><rect x="3" y="5" width="2" height="1" fill="#6a4030"/><rect x="5" y="5" width="1" height="1" fill="#be886c"/><rect x="6" y="5" width="1" height="1" fill="#a26a47"/><rect x="7" y="5" width="1" height="1" fill="#805334"/><rect x="0" y="6" width="1" height="1" fill="#905e43"/><rect x="1" y="6" width="1" height="1" fill="#965f40"/><rect x="2" y="6" width="1" height="1" fill="#40200a"/><rect x="3" y="6" width="2" height="1" fill="#874a3a"/><rect x="5" y="6" width="1" height="1" fill="#40200a"/><rect x="6" y="6" width="1" height="1" fill="#8f5e3e"/><rect x="7" y="6" width="1" height="1" fill="#815339"/><rect x="0" y="7" width="1" height="1" fill="#6f452c"/><rect x="1" y="7" width="1" height="1" fill="#6d432a"/><rect x="2" y="7" width="4" height="1" fill="#40200a"/><rect x="6" y="7" width="1" height="1" fill="#83553b"/><rect x="7" y="7" width="1" height="1" fill="#7a4e33"/></svg></div>
<div class="row" style="top:918px;background:#1b1b1b;border-radius:0 0 4px 4px"></div>
<div class="badge" style="top:931.2px"></div>
<div class="a" style="left:497.7px;top:955.2px;width:2.3px;height:2.3px;background:#9a9a9a;border-radius:.6px"></div>
<div class="av" style="left:1197px;top:933px"><svg style="left:0;top:0" width="30" height="30" viewBox="0 0 8 8" shape-rendering="crispEdges" preserveAspectRatio="none"><rect x="0" y="0" width="1" height="1" fill="#2e2418"/><rect x="1" y="0" width="5" height="1" fill="#5c4434"/><rect x="6" y="0" width="1" height="1" fill="#4a3c2c"/><rect x="7" y="0" width="1" height="1" fill="#4a3420"/><rect x="0" y="1" width="1" height="1" fill="#5e483a"/><rect x="1" y="1" width="1" height="1" fill="#5e4838"/><rect x="2" y="1" width="1" height="1" fill="#6e4c38"/><rect x="3" y="1" width="1" height="1" fill="#704e3a"/><rect x="4" y="1" width="1" height="1" fill="#78543e"/><rect x="5" y="1" width="1" height="1" fill="#683c28"/><rect x="6" y="1" width="1" height="1" fill="#6c3e28"/><rect x="7" y="1" width="1" height="1" fill="#3a2a14"/><rect x="0" y="2" width="1" height="1" fill="#604a3c"/><rect x="1" y="2" width="1" height="1" fill="#7a5848"/><rect x="2" y="2" width="1" height="1" fill="#785646"/><rect x="3" y="2" width="1" height="1" fill="#6a4636"/><rect x="4" y="2" width="1" height="1" fill="#6e4a38"/><rect x="5" y="2" width="1" height="1" fill="#5e3220"/><rect x="6" y="2" width="1" height="1" fill="#5c2e1a"/><rect x="7" y="2" width="1" height="1" fill="#3e2808"/><rect x="0" y="3" width="1" height="1" fill="#604a3c"/><rect x="1" y="3" width="1" height="1" fill="#624c3c"/><rect x="2" y="3" width="1" height="1" fill="#6a5040"/><rect x="3" y="3" width="1" height="1" fill="#3e2a08"/><rect x="4" y="3" width="1" height="1" fill="#e8c4a0"/><rect x="5" y="3" width="1" height="1" fill="#ecc4a0"/><rect x="6" y="3" width="1" height="1" fill="#c4a07c"/><rect x="7" y="3" width="1" height="1" fill="#58381c"/><rect x="0" y="4" width="1" height="1" fill="#582e14"/><rect x="1" y="4" width="1" height="1" fill="#5c4a20"/><rect x="2" y="4" width="1" height="1" fill="#000000"/><rect x="3" y="4" width="2" height="1" fill="#e4bc98"/><rect x="5" y="4" width="1" height="1" fill="#000000"/><rect x="6" y="4" width="1" height="1" fill="#f0f0f0"/><rect x="7" y="4" width="1" height="1" fill="#6a4830"/><rect x="0" y="5" width="8" height="1" fill="#000000"/><rect x="0" y="6" width="1" height="1" fill="#001800"/><rect x="1" y="6" width="6" height="1" fill="#0a0c0a"/><rect x="7" y="6" width="1" height="1" fill="#001800"/><rect x="0" y="7" width="1" height="1" fill="#001800"/><rect x="1" y="7" width="6" height="1" fill="#0a1012"/><rect x="7" y="7" width="1" height="1" fill="#001800"/></svg></div>
<svg style="left:1838px;top:969px" width="28" height="17" viewBox="0 0 28 17"><path d="M0.900 15.400l12.500-13.600l12.900 13.600" stroke="#7289da" stroke-width="2.100" fill="none" stroke-linejoin="miter"/></svg>
<div class="a" style="left:1277px;top:192px;width:197px;height:35px;background:#181818;border-radius:4px;box-shadow:0 1px 3px rgba(0,0,0,.4)"></div>
<div class="a" style="left:1479px;top:192px;width:53px;height:35px;background:#7289da;border-radius:5px"></div>
<svg style="left:1490px;top:196px" width="32" height="28" viewBox="0 0 32 28"><circle cx="14.700" cy="11.800" r="4.400" stroke="#fff" stroke-width="2.800" fill="none"/><path d="M18.300 15.400l3.700 3.600" stroke="#fff" stroke-width="2.700" stroke-linecap="round"/></svg>
<div class="box" style="top:243px;height:278px"></div>
<svg style="left:1290px;top:258.500px" width="18" height="10" viewBox="0 0 18 10"><rect x="0" y="0.300" width="17.500" height="9" rx="4.500" fill="#7089dd"/><path d="M4.700 2.600v4.400M2.500 4.800h4.400" stroke="#181818" stroke-width="1.400"/><circle cx="12.200" cy="6" r="1.100" fill="#181818"/><circle cx="14.600" cy="3.600" r="1.100" fill="#181818"/></svg>
<svg style="left:1291.500px;top:293px" width="28" height="31" viewBox="0 0 28 31"><path d="M14 0.300l13.700 6.400l-13.700 6.900l-13.700-6.900z" fill="#8fc653"/><path d="M0.300 6.700l13.700 6.900v3.200l-13.700-6.900z" fill="#79b03f"/><path d="M27.700 6.700l-13.700 6.900v3.200l13.700-6.900z" fill="#6da035"/><path d="M0.300 9.900l13.700 6.900v13.900l-13.700-7z" fill="#a06a54"/><path d="M27.700 9.900l-13.700 6.900v13.900l13.700-7z" fill="#87553f"/></svg>
<svg style="left:1291.500px;top:336.500px" width="28" height="31" viewBox="0 0 28 31"><defs><filter id="nz" x="0" y="0" width="100%" height="100%" color-interpolation-filters="sRGB"><feTurbulence type="fractalNoise" baseFrequency="0.85" numOctaves="2" seed="7" result="n"/><feColorMatrix in="n" type="matrix" values="1.300 0 0 0 -0.370  1.300 0 0 0 -0.370  1.300 0 0 0 -0.370  0 0 0 0 1" result="g0"/><feGaussianBlur in="g0" stdDeviation="0.35" result="g"/><feComposite in="g" in2="SourceGraphic" operator="in"/></filter></defs><path d="M14 0.300l13.700 6.400v17l-13.700 7l-13.700-7v-17z" fill="#444" filter="url(#nz)"/><path d="M14 13.600l13.700-6.900v17l-13.700 7z" fill="#000" opacity=".22"/><path d="M14 13.600l-13.700-6.900v17l13.700 7z" fill="#000" opacity=".08"/></svg>
<svg style="left:1288px;top:380px" width="34" height="34" viewBox="0 0 34 34"><defs><linearGradient id="tsg" x1="0" y1="0" x2="1" y2="0"><stop offset="0" stop-color="#7c84ac"/><stop offset=".55" stop-color="#9ca2c2"/><stop offset="1" stop-color="#d2d5e2"/></linearGradient></defs><path d="M11.500 5.600C20 3.300 28.600 8 28.600 15.600C28.600 23.500 20 28.800 9.600 26.400" stroke="#272949" stroke-width="1.400" fill="none" stroke-linecap="round"/><path d="M9 13.500C9 10.500 9.300 7.800 10.400 6l1.800.3C11.500 8 11.400 10.800 11.500 13.500z" fill="#33355e"/><path d="M11.800 5.800L14.200 6.300C16.900 10 17.600 15 17.100 19L16.600 23.500L12.300 23.900C14.300 20.500 14.500 17 13.900 13.500C13.400 10.500 12.800 8 11.800 5.800z" fill="#33355e"/><path d="M13.900 6.400C20 6.400 25.700 10 25.700 15.500C25.700 20 21.600 23.100 16.800 23.800C18.400 21.300 16.900 19.800 17.500 18.600C16.500 17.500 18 16 17 14.600C17.500 11.500 16.100 8.600 13.900 6.400z" fill="url(#tsg)"/><path d="M17.600 13.800c1.300 1 .3 2.500 1.300 3.500c-.6 1.200.5 2-.5 3.200" stroke="#eceef4" stroke-width=".9" fill="none"/><circle cx="9.150" cy="15" r="2.500" fill="#45ae22"/></svg>
<svg style="left:1293.3px;top:428.2px" width="23.8" height="24" viewBox="0 0 20 20"><defs><radialGradient id="igb" cx="0.250" cy="1.050" r="1.300"><stop offset="0" stop-color="#ffd676"/><stop offset=".25" stop-color="#f7a23c"/><stop offset=".5" stop-color="#e8365a"/><stop offset=".75" stop-color="#b832a8"/><stop offset="1" stop-color="#5b4fe0"/></radialGradient></defs><rect width="20" height="20" rx="4.500" fill="url(#igb)"/><rect x="4" y="4" width="12" height="12" rx="3.500" stroke="#fff" stroke-width="1.600" fill="none"/><circle cx="10" cy="10" r="2.900" stroke="#fff" stroke-width="1.600" fill="none"/><circle cx="13.700" cy="6.300" r="1" fill="#fff"/></svg>
<svg style="left:1293.400px;top:472.200px" width="24.400" height="24.400" viewBox="0 0 25 25"><defs><linearGradient id="dcg" x1="0" y1="0" x2="0" y2="1"><stop offset="0" stop-color="#7a8fdc"/><stop offset="1" stop-color="#5d73c3"/></linearGradient></defs><circle cx="12.500" cy="12.500" r="12.500" fill="url(#dcg)"/><g transform="translate(12.500 12.800) scale(1.270) translate(-12.500 -12.700)"><path d="M8.200 8.300c1.400-.6 2.300-.7 2.300-.7l.3.500c1.100-.2 2.300-.2 3.400 0l.3-.5s.9.100 2.300.7c1.300 1.900 2.300 4.600 2 7.800c-1 .8-2.100 1.300-3.300 1.500l-.6-1c.5-.2.900-.4 1.300-.7c-2.300 1.100-5.100 1.100-7.400 0c.4.300.8.500 1.300.7l-.6 1c-1.200-.2-2.300-.7-3.300-1.500c-.3-3.200.7-5.900 2-7.800z" fill="#fff"/><ellipse cx="10.300" cy="13" rx="1.200" ry="1.400" fill="#6a80cf"/><ellipse cx="14.700" cy="13" rx="1.200" ry="1.400" fill="#6a80cf"/></g></svg>
<div class="box" style="top:538px;height:169px"></div>
<div class="a" style="left:1277px;top:665px;width:255px;height:42px;background:#1c1c1c;border-radius:0 0 4px 4px"></div>
<svg style="left:1289.5px;top:551.8px" width="18" height="13" viewBox="0 0 18 13"><g fill="#7089dd"><circle cx="2.900" cy="3.800" r="1.650"/><circle cx="8.800" cy="3.400" r="2.900"/><path d="M0.400 10.300v-1.400c0-1.300 1-2.200 2.200-2.200h.9c.4 0 .8.100 1.100.300c-.9.700-1.500 1.800-1.500 3v.3z"/><path d="M3.800 12.700v-2.300c0-1.900 1.500-3.300 3.300-3.300h3.400c.3 0 .6 0 .9.100c-1.200 1.300-1.300 3.500-.2 5.500z"/></g><circle cx="13.600" cy="8.300" r="4.400" fill="#181818"/><circle cx="13.600" cy="8.300" r="2.700" fill="#7089dd"/><circle cx="13.600" cy="8.300" r="3.150" fill="none" stroke="#7089dd" stroke-width="1.300" stroke-dasharray="1.350 1.124"/><circle cx="13.600" cy="8.300" r="0.950" fill="#181818"/></svg>
<div class="av" style="left:1290px;top:579px"><svg style="left:0;top:0" width="30" height="30" viewBox="0 0 30 30"><defs><linearGradient id="ang" x1="0" y1="0" x2="0" y2="1"><stop offset="0" stop-color="#f0546c"/><stop offset=".35" stop-color="#f37c6c"/><stop offset=".6" stop-color="#f8a868"/><stop offset=".82" stop-color="#fbd266"/><stop offset="1" stop-color="#fee468"/></linearGradient></defs><rect width="30" height="30" fill="#000"/><circle cx="15" cy="15" r="15" fill="url(#ang)"/><path d="M4.300 16.300l4 1.800h4.300M25.700 16.300l-4 1.800h-4.300" stroke="#4b4a52" stroke-width="1.750" stroke-linecap="round"/><ellipse cx="8.600" cy="19.300" rx="1.500" ry="1.700" fill="#4b4a52"/><ellipse cx="21.400" cy="19.300" rx="1.500" ry="1.700" fill="#4b4a52"/><rect x="10.300" y="23" width="9.300" height="2.300" rx="1.100" fill="#4b4a52"/></svg></div>
<div class="av" style="left:1290px;top:625px"><svg style="left:0;top:0" width="30" height="30" viewBox="0 0 8 8" shape-rendering="crispEdges" preserveAspectRatio="none"><rect x="0" y="0" width="1" height="1" fill="#020202"/><rect x="1" y="0" width="1" height="1" fill="#0a0a0a"/><rect x="2" y="0" width="1" height="1" fill="#020202"/><rect x="3" y="0" width="1" height="1" fill="#0c0c0c"/><rect x="4" y="0" width="1" height="1" fill="#050505"/><rect x="5" y="0" width="1" height="1" fill="#080808"/><rect x="6" y="0" width="1" height="1" fill="#020202"/><rect x="7" y="0" width="1" height="1" fill="#02020c"/><rect x="0" y="1" width="1" height="1" fill="#080808"/><rect x="1" y="1" width="1" height="1" fill="#0c0c0c"/><rect x="2" y="1" width="1" height="1" fill="#060606"/><rect x="3" y="1" width="1" height="1" fill="#020202"/><rect x="4" y="1" width="1" height="1" fill="#0a0a0a"/><rect x="5" y="1" width="1" height="1" fill="#020202"/><rect x="6" y="1" width="1" height="1" fill="#080808"/><rect x="7" y="1" width="1" height="1" fill="#020202"/><rect x="0" y="2" width="1" height="1" fill="#020202"/><rect x="1" y="2" width="1" height="1" fill="#050505"/><rect x="2" y="2" width="1" height="1" fill="#0a0a0a"/><rect x="3" y="2" width="1" height="1" fill="#0e0e0e"/><rect x="4" y="2" width="1" height="1" fill="#020202"/><rect x="5" y="2" width="1" height="1" fill="#060606"/><rect x="6" y="2" width="1" height="1" fill="#050505"/><rect x="7" y="2" width="1" height="1" fill="#0a0a0a"/><rect x="0" y="3" width="1" height="1" fill="#060606"/><rect x="1" y="3" width="1" height="1" fill="#020202"/><rect x="2" y="3" width="1" height="1" fill="#0c0c0c"/><rect x="3" y="3" width="1" height="1" fill="#050505"/><rect x="4" y="3" width="1" height="1" fill="#0a0a0a"/><rect x="5" y="3" width="2" height="1" fill="#020202"/><rect x="7" y="3" width="1" height="1" fill="#060606"/><rect x="0" y="4" width="1" height="1" fill="#2a7cf0"/><rect x="1" y="4" width="1" height="1" fill="#1c5cd8"/><rect x="2" y="4" width="1" height="1" fill="#2a7cf0"/><rect x="3" y="4" width="1" height="1" fill="#080808"/><rect x="4" y="4" width="1" height="1" fill="#020202"/><rect x="5" y="4" width="1" height="1" fill="#2a7cf0"/><rect x="6" y="4" width="1" height="1" fill="#1c60dc"/><rect x="7" y="4" width="1" height="1" fill="#2a7cf0"/><rect x="0" y="5" width="1" height="1" fill="#020202"/><rect x="1" y="5" width="1" height="1" fill="#080808"/><rect x="2" y="5" width="1" height="1" fill="#0a0a0a"/><rect x="3" y="5" width="1" height="1" fill="#020202"/><rect x="4" y="5" width="1" height="1" fill="#060606"/><rect x="5" y="5" width="1" height="1" fill="#080808"/><rect x="6" y="5" width="1" height="1" fill="#020202"/><rect x="7" y="5" width="1" height="1" fill="#080808"/><rect x="0" y="6" width="1" height="1" fill="#080808"/><rect x="1" y="6" width="1" height="1" fill="#020202"/><rect x="2" y="6" width="1" height="1" fill="#060606"/><rect x="3" y="6" width="1" height="1" fill="#0a0a0a"/><rect x="4" y="6" width="1" height="1" fill="#020202"/><rect x="5" y="6" width="1" height="1" fill="#060606"/><rect x="6" y="6" width="1" height="1" fill="#0a0a0a"/><rect x="7" y="6" width="1" height="1" fill="#020202"/><rect x="0" y="7" width="1" height="1" fill="#020202"/><rect x="1" y="7" width="1" height="1" fill="#0a0a0a"/><rect x="2" y="7" width="1" height="1" fill="#020202"/><rect x="3" y="7" width="1" height="1" fill="#060606"/><rect x="4" y="7" width="1" height="1" fill="#0a0a0a"/><rect x="5" y="7" width="1" height="1" fill="#020202"/><rect x="6" y="7" width="1" height="1" fill="#060606"/><rect x="7" y="7" width="1" height="1" fill="#020202"/></svg></div>
<div class="box" style="top:723px;height:268px"></div>
<svg style="left:1291.500px;top:737px" width="14" height="14" viewBox="0 0 14 14"><circle cx="7" cy="7" r="6.800" fill="#7089dd"/><path d="M5.300 3.800l5 3.200l-5 3.200z" fill="#181818"/></svg>
<div class="av" style="left:1290px;top:764px"><div style="position:absolute;left:0;top:0;width:30px;height:30px;background:#222"></div><span class="t" style="left:1.700px;top:7px;font-size:10.500px;line-height:10px;font-weight:700;font-style:italic;color:#e6e6e6;letter-spacing:-0.800px;transform:scaleX(1.24)">DMS</span><span class="t" style="left:2.300px;top:17.600px;font-size:5.500px;line-height:6px;color:#a4a4a4;font-weight:700;letter-spacing:-0.100px;transform:scaleX(1.01)">RECORDS</span></div>
<div class="a" style="left:1390.8px;top:784.2px;width:1.9px;height:1.9px;background:#a0a0a0;border-radius:.6px"></div>
<div class="av" style="left:1290px;top:810px"><svg style="left:0;top:0" width="30" height="30" viewBox="0 0 8 8" shape-rendering="crispEdges" preserveAspectRatio="none"><rect x="0" y="0" width="1" height="1" fill="#2f200d"/><rect x="1" y="0" width="1" height="1" fill="#2b1e0d"/><rect x="2" y="0" width="1" height="1" fill="#2f1f0f"/><rect x="3" y="0" width="1" height="1" fill="#281c0b"/><rect x="4" y="0" width="1" height="1" fill="#241808"/><rect x="5" y="0" width="1" height="1" fill="#261a0a"/><rect x="6" y="0" width="1" height="1" fill="#2b1e0d"/><rect x="7" y="0" width="1" height="1" fill="#2a1d0d"/><rect x="0" y="1" width="3" height="1" fill="#2f200d"/><rect x="3" y="1" width="1" height="1" fill="#332411"/><rect x="4" y="1" width="1" height="1" fill="#422a12"/><rect x="5" y="1" width="1" height="1" fill="#3f2a15"/><rect x="6" y="1" width="1" height="1" fill="#2c1e0e"/><rect x="7" y="1" width="1" height="1" fill="#281c0b"/><rect x="0" y="2" width="1" height="1" fill="#2f200d"/><rect x="1" y="2" width="1" height="1" fill="#b6896c"/><rect x="2" y="2" width="1" height="1" fill="#bd8e72"/><rect x="3" y="2" width="1" height="1" fill="#c69680"/><rect x="4" y="2" width="1" height="1" fill="#bd8b72"/><rect x="5" y="2" width="1" height="1" fill="#bd8e74"/><rect x="6" y="2" width="1" height="1" fill="#ac765a"/><rect x="7" y="2" width="1" height="1" fill="#342512"/><rect x="0" y="3" width="1" height="1" fill="#aa7d66"/><rect x="1" y="3" width="1" height="1" fill="#b4846d"/><rect x="2" y="3" width="1" height="1" fill="#aa7d66"/><rect x="3" y="3" width="1" height="1" fill="#ad806d"/><rect x="4" y="3" width="1" height="1" fill="#9c725c"/><rect x="5" y="3" width="1" height="1" fill="#bb8972"/><rect x="6" y="3" width="2" height="1" fill="#9c694c"/><rect x="0" y="4" width="1" height="1" fill="#b4846d"/><rect x="1" y="4" width="1" height="1" fill="#ffffff"/><rect x="2" y="4" width="1" height="1" fill="#523d89"/><rect x="3" y="4" width="1" height="1" fill="#b57b67"/><rect x="4" y="4" width="1" height="1" fill="#bb8972"/><rect x="5" y="4" width="1" height="1" fill="#523d89"/><rect x="6" y="4" width="1" height="1" fill="#ffffff"/><rect x="7" y="4" width="1" height="1" fill="#aa7d66"/><rect x="0" y="5" width="1" height="1" fill="#9c6346"/><rect x="1" y="5" width="1" height="1" fill="#b37b62"/><rect x="2" y="5" width="1" height="1" fill="#b78272"/><rect x="3" y="5" width="2" height="1" fill="#6a4030"/><rect x="5" y="5" width="1" height="1" fill="#be886c"/><rect x="6" y="5" width="1" height="1" fill="#a26a47"/><rect x="7" y="5" width="1" height="1" fill="#805334"/><rect x="0" y="6" width="1" height="1" fill="#905e43"/><rect x="1" y="6" width="1" height="1" fill="#965f40"/><rect x="2" y="6" width="1" height="1" fill="#40200a"/><rect x="3" y="6" width="2" height="1" fill="#874a3a"/><rect x="5" y="6" width="1" height="1" fill="#40200a"/><rect x="6" y="6" width="1" height="1" fill="#8f5e3e"/><rect x="7" y="6" width="1" height="1" fill="#815339"/><rect x="0" y="7" width="1" height="1" fill="#6f452c"/><rect x="1" y="7" width="1" height="1" fill="#6d432a"/><rect x="2" y="7" width="4" height="1" fill="#40200a"/><rect x="6" y="7" width="1" height="1" fill="#83553b"/><rect x="7" y="7" width="1" height="1" fill="#7a4e33"/></svg></div>
<div class="a" style="left:1427.7px;top:830.2px;width:1.9px;height:1.9px;background:#a0a0a0;border-radius:.6px"></div>
<div class="av" style="left:1290px;top:856px"><svg style="left:0;top:0" width="30" height="30" viewBox="0 0 8 8" shape-rendering="crispEdges" preserveAspectRatio="none"><rect x="0" y="0" width="8" height="1" fill="#ffffff"/><rect x="0" y="1" width="8" height="1" fill="#ffffff"/><rect x="0" y="2" width="3" height="1" fill="#ffffff"/><rect x="3" y="2" width="2" height="1" fill="#000000"/><rect x="5" y="2" width="1" height="1" fill="#e4e4dc"/><rect x="6" y="2" width="2" height="1" fill="#ffffff"/><rect x="0" y="3" width="2" height="1" fill="#ffffff"/><rect x="2" y="3" width="2" height="1" fill="#000000"/><rect x="4" y="3" width="1" height="1" fill="#dcdcd4"/><rect x="5" y="3" width="2" height="1" fill="#000000"/><rect x="7" y="3" width="1" height="1" fill="#ffffff"/><rect x="0" y="4" width="1" height="1" fill="#ffffff"/><rect x="1" y="4" width="2" height="1" fill="#000000"/><rect x="3" y="4" width="2" height="1" fill="#dcdcd4"/><rect x="5" y="4" width="1" height="1" fill="#000000"/><rect x="6" y="4" width="1" height="1" fill="#ffffff"/><rect x="7" y="4" width="1" height="1" fill="#000000"/><rect x="0" y="5" width="3" height="1" fill="#000000"/><rect x="3" y="5" width="2" height="1" fill="#d8d8d0"/><rect x="5" y="5" width="3" height="1" fill="#000000"/><rect x="0" y="6" width="1" height="1" fill="#000000"/><rect x="1" y="6" width="1" height="1" fill="#c00000"/><rect x="2" y="6" width="5" height="1" fill="#e0e0d8"/><rect x="7" y="6" width="1" height="1" fill="#c00000"/><rect x="0" y="7" width="1" height="1" fill="#000000"/><rect x="1" y="7" width="1" height="1" fill="#f0f0ec"/><rect x="2" y="7" width="1" height="1" fill="#c00000"/><rect x="3" y="7" width="3" height="1" fill="#ffffff"/><rect x="6" y="7" width="1" height="1" fill="#c00000"/><rect x="7" y="7" width="1" height="1" fill="#e8e8e4"/></svg></div>
<div class="a" style="left:1386.8px;top:876.2px;width:1.9px;height:1.9px;background:#a0a0a0;border-radius:.6px"></div>
<div class="av" style="left:1290px;top:902px"><svg style="left:0;top:0" width="30" height="30" viewBox="0 0 30 30"><defs><linearGradient id="sky" x1="0" y1="0" x2="1" y2="0"><stop offset="0" stop-color="#dcdfee"/><stop offset=".35" stop-color="#b4c8e6"/><stop offset="1" stop-color="#3a94dc"/></linearGradient><linearGradient id="skf" x1="0" y1="0" x2="0" y2="1"><stop offset="0" stop-color="#fff" stop-opacity="0"/><stop offset="1" stop-color="#d4dcee" stop-opacity=".95"/></linearGradient><linearGradient id="sn" x1="0" y1="0" x2="1" y2="1"><stop offset="0" stop-color="#dfe3ef"/><stop offset=".5" stop-color="#b4bede"/><stop offset="1" stop-color="#7f94d2"/></linearGradient><radialGradient id="sl" cx=".5" cy=".4" r=".6"><stop offset="0" stop-color="#e6e6ec"/><stop offset=".75" stop-color="#d2d4de"/><stop offset="1" stop-color="#b4b8c8"/></radialGradient><filter id="sb" x="-20%" y="-20%" width="140%" height="140%"><feGaussianBlur stdDeviation=".7"/></filter></defs><rect width="30" height="30" fill="#c8d2e8"/><g filter="url(#sb)"><rect x="-2" y="-2" width="34" height="15" fill="url(#sky)"/><rect x="-2" y="3" width="34" height="10" fill="url(#skf)"/><rect x="-2" y="12.500" width="34" height="20" fill="url(#sn)"/><rect x="1.500" y="13.500" width="5" height="1.300" fill="#5c7cbc"/><rect x="23.500" y="12.800" width="8" height="1.800" fill="#4a7cc4"/><path d="M1 24c3-1.500 6-2.500 8-2.500v2.500c-2 .5-5 1.500-8 2.500zM29 25c-2-1.500-4-3-6.500-3.500v2.500c2 .8 4 2 6.500 3.500z" fill="#a8acbc"/><ellipse cx="15.300" cy="15.800" rx="7.900" ry="9.800" fill="url(#sl)"/><rect x="8" y="21" width="15" height="4.500" rx="2" fill="#d2d4de"/></g><g filter="url(#sb)"><ellipse cx="11.800" cy="9.600" rx="1.300" ry="1.200" fill="#30343f"/><ellipse cx="18.500" cy="9.600" rx="1.300" ry="1.200" fill="#30343f"/><ellipse cx="15" cy="12.300" rx="2.600" ry="2" fill="#3f342e"/><ellipse cx="15.200" cy="15.700" rx="2.100" ry="2.300" fill="#7c3038"/></g></svg></div>
<div class="a" style="left:1422.5px;top:922.2px;width:1.9px;height:1.9px;background:#a0a0a0;border-radius:.6px"></div>
<div class="av" style="left:1290px;top:948px"><svg style="left:0;top:0" width="30" height="30" viewBox="0 0 8 8" shape-rendering="crispEdges" preserveAspectRatio="none"><rect x="0" y="0" width="1" height="1" fill="#2f200d"/><rect x="1" y="0" width="1" height="1" fill="#2b1e0d"/><rect x="2" y="0" width="1" height="1" fill="#2f1f0f"/><rect x="3" y="0" width="1" height="1" fill="#281c0b"/><rect x="4" y="0" width="1" height="1" fill="#241808"/><rect x="5" y="0" width="1" height="1" fill="#261a0a"/><rect x="6" y="0" width="1" height="1" fill="#2b1e0d"/><rect x="7" y="0" width="1" height="1" fill="#2a1d0d"/><rect x="0" y="1" width="3" height="1" fill="#2f200d"/><rect x="3" y="1" width="1" height="1" fill="#332411"/><rect x="4" y="1" width="1" height="1" fill="#422a12"/><rect x="5" y="1" width="1" height="1" fill="#3f2a15"/><rect x="6" y="1" width="1" height="1" fill="#2c1e0e"/><rect x="7" y="1" width="1" height="1" fill="#281c0b"/><rect x="0" y="2" width="1" height="1" fill="#2f200d"/><rect x="1" y="2" width="1" height="1" fill="#b6896c"/><rect x="2" y="2" width="1" height="1" fill="#bd8e72"/><rect x="3" y="2" width="1" height="1" fill="#c69680"/><rect x="4" y="2" width="1" height="1" fill="#bd8b72"/><rect x="5" y="2" width="1" height="1" fill="#bd8e74"/><rect x="6" y="2" width="1" height="1" fill="#ac765a"/><rect x="7" y="2" width="1" height="1" fill="#342512"/><rect x="0" y="3" width="1" height="1" fill="#aa7d66"/><rect x="1" y="3" width="1" height="1" fill="#b4846d"/><rect x="2" y="3" width="1" height="1" fill="#aa7d66"/><rect x="3" y="3" width="1" height="1" fill="#ad806d"/><rect x="4" y="3" width="1" height="1" fill="#9c725c"/><rect x="5" y="3" width="1" height="1" fill="#bb8972"/><rect x="6" y="3" width="2" height="1" fill="#9c694c"/><rect x="0" y="4" width="1" height="1" fill="#b4846d"/><rect x="1" y="4" width="1" height="1" fill="#ffffff"/><rect x="2" y="4" width="1" height="1" fill="#523d89"/><rect x="3" y="4" width="1" height="1" fill="#b57b67"/><rect x="4" y="4" width="1" height="1" fill="#bb8972"/><rect x="5" y="4" width="1" height="1" fill="#523d89"/><rect x="6" y="4" width="1" height="1" fill="#ffffff"/><rect x="7" y="4" width="1" height="1" fill="#aa7d66"/><rect x="0" y="5" width="1" height="1" fill="#9c6346"/><rect x="1" y="5" width="1" height="1" fill="#b37b62"/><rect x="2" y="5" width="1" height="1" fill="#b78272"/><rect x="3" y="5" width="2" height="1" fill="#6a4030"/><rect x="5" y="5" width="1" height="1" fill="#be886c"/><rect x="6" y="5" width="1" height="1" fill="#a26a47"/><rect x="7" y="5" width="1" height="1" fill="#805334"/><rect x="0" y="6" width="1" height="1" fill="#905e43"/><rect x="1" y="6" width="1" height="1" fill="#965f40"/><rect x="2" y="6" width="1" height="1" fill="#40200a"/><rect x="3" y="6" width="2" height="1" fill="#874a3a"/><rect x="5" y="6" width="1" height="1" fill="#40200a"/><rect x="6" y="6" width="1" height="1" fill="#8f5e3e"/><rect x="7" y="6" width="1" height="1" fill="#815339"/><rect x="0" y="7" width="1" height="1" fill="#6f452c"/><rect x="1" y="7" width="1" height="1" fill="#6d432a"/><rect x="2" y="7" width="4" height="1" fill="#40200a"/><rect x="6" y="7" width="1" height="1" fill="#83553b"/><rect x="7" y="7" width="1" height="1" fill="#7a4e33"/></svg></div>
<div class="a" style="left:1420.0px;top:968.2px;width:1.9px;height:1.9px;background:#a0a0a0;border-radius:.6px"></div>
<div class="box" style="top:1007px;height:40px"></div>
<svg style="left:1289.5px;top:1020.0px" width="18" height="13" viewBox="0 0 18 13"><g fill="#7089dd"><circle cx="2.900" cy="3.800" r="1.650"/><circle cx="8.800" cy="3.400" r="2.900"/><path d="M0.400 10.300v-1.400c0-1.300 1-2.200 2.200-2.200h.9c.4 0 .8.100 1.100.300c-.9.700-1.500 1.800-1.500 3v.3z"/><path d="M3.800 12.700v-2.300c0-1.900 1.500-3.300 3.300-3.300h3.400c.3 0 .6 0 .9.100c-1.200 1.300-1.300 3.500-.2 5.500z"/></g><circle cx="13.600" cy="8.300" r="4.400" fill="#181818"/><circle cx="13.600" cy="8.300" r="2.700" fill="#7089dd"/><circle cx="13.600" cy="8.300" r="3.150" fill="none" stroke="#7089dd" stroke-width="1.300" stroke-dasharray="1.350 1.124"/><circle cx="13.600" cy="8.300" r="0.950" fill="#181818"/></svg>
<span class="t" style="left:65.87px;top:10px;font-size:12px;line-height:12px;color:#1b1d28;transform:scaleX(0.9833);">Fórum - Stran 1 • Trenend</span>
<span class="t" style="left:199.67px;top:46px;font-size:9px;line-height:9px;color:#fff;font-weight:700;transform:scaleX(0.8832);letter-spacing:0.7px;">VPN</span>
<span class="t" style="left:260.75px;top:44px;font-size:13.8px;line-height:13.8px;color:#15171f;transform:scaleX(1.0062);">trenend.eu</span>
<span class="t" style="left:326.34px;top:44px;font-size:13.8px;line-height:13.8px;color:#6b7a8f;transform:scaleX(1.0800);">/forum/view/37-pijat-pihlky/</span>
<span class="t" style="left:78.29px;top:77px;font-size:12px;line-height:12px;color:#3c3f4a;transform:scaleX(0.9657);">BIG Paintball! - Rob...</span>
<span class="t" style="left:437.61px;top:138px;font-size:13.9px;line-height:13.9px;color:#fff;font-weight:700;transform:scaleX(1.1247);">Domů</span>
<span class="t" style="left:513.58px;top:138px;font-size:13.9px;line-height:13.9px;color:#fff;font-weight:700;transform:scaleX(1.0647);">Fórum</span>
<span class="t" style="left:591.93px;top:138px;font-size:13.9px;line-height:13.9px;color:#fff;font-weight:700;transform:scaleX(1.0139);">Hlasování</span>
<span class="t" style="left:690.04px;top:138px;font-size:13.9px;line-height:13.9px;color:#fff;font-weight:700;transform:scaleX(1.0403);">Store</span>
<span class="t" style="left:758.75px;top:138px;font-size:13.9px;line-height:13.9px;color:#fff;font-weight:700;transform:scaleX(1.0123);">Vývojářský event</span>
<span class="t" style="left:906.45px;top:138px;font-size:13.9px;line-height:13.9px;color:#fff;font-weight:700;transform:scaleX(1.0253);">Více</span>
<span class="t" style="left:1167.15px;top:138px;font-size:13.9px;line-height:13.9px;color:#fff;font-weight:700;transform:scaleX(1.0219);">Zprávy</span>
<span class="t" style="left:1267.14px;top:138px;font-size:13.9px;line-height:13.9px;color:#fff;font-weight:700;transform:scaleX(1.0352);">Upozornění</span>
<span class="t" style="left:1398.75px;top:138px;font-size:13.9px;line-height:13.9px;color:#fff;font-weight:700;transform:scaleX(1.0209);">zemiakovy_rozok</span>
<span class="t" style="left:437.46px;top:204px;font-size:12.6px;line-height:12.6px;color:#9b9b9b;transform:scaleX(1.2555);">Domů</span>
<span class="t" style="left:485.66px;top:204px;font-size:12.6px;line-height:12.6px;color:#6a6a6a;transform:scaleX(1.5676);">/</span>
<span class="t" style="left:503.14px;top:204px;font-size:12.6px;line-height:12.6px;color:#9b9b9b;transform:scaleX(1.0780);">ŽÁDOSTI A NAHLAŠOVÁNÍ</span>
<span class="t" style="left:680.66px;top:204px;font-size:12.6px;line-height:12.6px;color:#6a6a6a;transform:scaleX(1.5676);">/</span>
<span class="t" style="left:697.13px;top:204px;font-size:12.6px;line-height:12.6px;color:#9b9b9b;transform:scaleX(1.1141);">Žádost o členství v AT</span>
<span class="t" style="left:841.36px;top:204px;font-size:12.6px;line-height:12.6px;color:#6a6a6a;transform:scaleX(1.5676);">/</span>
<span class="t" style="left:857.54px;top:204px;font-size:12.6px;line-height:12.6px;color:#7089dd;transform:scaleX(1.1790);">Přijaté přihlášky</span>
<span class="t" style="left:421.28px;top:246px;font-size:24.6px;line-height:24.6px;color:#f2f2f2;-webkit-text-stroke:0.2px #f2f2f2;transform:scaleX(1.1275);">Přijaté přihlášky</span>
<span class="t" style="left:432.29px;top:295px;font-size:12px;line-height:12px;color:#4a4a4a;transform:scaleX(0.7612);">«</span>
<span class="t" style="left:466.21px;top:295px;font-size:13.2px;line-height:13.2px;color:#fff;transform:scaleX(0.7719);">1</span>
<span class="t" style="left:499.24px;top:295px;font-size:13.2px;line-height:13.2px;color:#d0d0d0;transform:scaleX(1.0597);">2</span>
<span class="t" style="left:534.29px;top:295px;font-size:12px;line-height:12px;color:#d0d0d0;transform:scaleX(0.7612);">»</span>
<span class="t" style="left:432.29px;top:1001px;font-size:12px;line-height:12px;color:#4a4a4a;transform:scaleX(0.7612);">«</span>
<span class="t" style="left:466.21px;top:1001px;font-size:13.2px;line-height:13.2px;color:#fff;transform:scaleX(0.7719);">1</span>
<span class="t" style="left:499.24px;top:1001px;font-size:13.2px;line-height:13.2px;color:#d0d0d0;transform:scaleX(1.0597);">2</span>
<span class="t" style="left:534.29px;top:1001px;font-size:12px;line-height:12px;color:#d0d0d0;transform:scaleX(0.7612);">»</span>
<span class="t" style="left:445.33px;top:347px;font-size:14.2px;line-height:14.2px;color:#fff;font-weight:700;transform:scaleX(1.1002);">NORMAL THREADS</span>
<span class="t" style="left:454.36px;top:395px;font-size:9.5px;line-height:9.5px;color:#fff;font-weight:700;transform:scaleX(0.9461);">Přijato</span>
<span class="t" style="left:497.99px;top:391px;font-size:15.2px;line-height:15.2px;color:#dcdcdc;-webkit-text-stroke:0.2px #dcdcdc;transform:scaleX(1.1378);">Nábor na pozici Buildera</span>
<span class="t" style="left:442.04px;top:410px;font-size:13px;line-height:13px;color:#e6e6e6;-webkit-text-stroke:0.2px #e6e6e6;transform:scaleX(1.0595);">CuzImSkyyyyy</span>
<span class="t" style="left:544.05px;top:410px;font-size:13px;line-height:13px;color:#9a9a9a;transform:scaleX(1.0891);">Před 5 dny</span>
<span class="t" style="left:953.62px;top:392px;font-size:12.8px;line-height:12.8px;color:#a6a6a6;transform:scaleX(1.1841);">Zhlédnutí</span>
<span class="t" style="left:952.58px;top:412px;font-size:12.8px;line-height:12.8px;color:#a6a6a6;transform:scaleX(1.1444);">Příspěvků</span>
<span class="t" style="left:1038.54px;top:392px;font-size:12.8px;line-height:12.8px;color:#d6d6d6;transform:scaleX(1.0657);">33</span>
<span class="t" style="left:1083.96px;top:392px;font-size:15.3px;line-height:15.3px;color:#dcdcdc;transform:scaleX(0.9643);">CuzImSkyyyyy</span>
<span class="t" style="left:1122.13px;top:411px;font-size:10.8px;line-height:10.8px;color:#a6a6a6;transform:scaleX(1.1393);">Před 5 dny</span>
<span class="t" style="left:441.69px;top:452px;font-size:15.2px;line-height:15.2px;color:#dcdcdc;-webkit-text-stroke:0.2px #dcdcdc;transform:scaleX(1.1380);">Builder - Luuiiz_</span>
<span class="t" style="left:441.66px;top:469px;font-size:13px;line-height:13px;color:#e6e6e6;-webkit-text-stroke:0.2px #e6e6e6;transform:scaleX(1.0762);">Luuiiz_</span>
<span class="t" style="left:497.36px;top:469px;font-size:13px;line-height:13px;color:#9a9a9a;transform:scaleX(1.0755);">Před 1 měsícem</span>
<span class="t" style="left:953.62px;top:452px;font-size:12.8px;line-height:12.8px;color:#a6a6a6;transform:scaleX(1.1841);">Zhlédnutí</span>
<span class="t" style="left:952.58px;top:472px;font-size:12.8px;line-height:12.8px;color:#a6a6a6;transform:scaleX(1.1444);">Příspěvků</span>
<span class="t" style="left:1038.03px;top:452px;font-size:12.8px;line-height:12.8px;color:#d6d6d6;transform:scaleX(1.1022);">54</span>
<span class="t" style="left:1133.68px;top:452px;font-size:15.3px;line-height:15.3px;color:#dcdcdc;transform:scaleX(0.9727);">Luuiiz_</span>
<span class="t" style="left:1093.23px;top:471px;font-size:10.8px;line-height:10.8px;color:#a6a6a6;transform:scaleX(1.1300);">Před 1 měsícem</span>
<span class="t" style="left:442.83px;top:512px;font-size:15.2px;line-height:15.2px;color:#dcdcdc;-webkit-text-stroke:0.2px #dcdcdc;transform:scaleX(1.1322);">Žádost o pozici Buildera.</span>
<span class="t" style="left:441.63px;top:529px;font-size:13px;line-height:13px;color:#e6e6e6;-webkit-text-stroke:0.2px #e6e6e6;transform:scaleX(1.1087);">MaldaLP</span>
<span class="t" style="left:508.26px;top:529px;font-size:13px;line-height:13px;color:#9a9a9a;transform:scaleX(1.0798);">Před 1 měsícem</span>
<span class="t" style="left:953.62px;top:512px;font-size:12.8px;line-height:12.8px;color:#a6a6a6;transform:scaleX(1.1841);">Zhlédnutí</span>
<span class="t" style="left:952.58px;top:532px;font-size:12.8px;line-height:12.8px;color:#a6a6a6;transform:scaleX(1.1444);">Příspěvků</span>
<span class="t" style="left:1031.71px;top:512px;font-size:12.8px;line-height:12.8px;color:#d6d6d6;transform:scaleX(1.0355);">105</span>
<span class="t" style="left:1121.15px;top:512px;font-size:15.3px;line-height:15.3px;color:#dcdcdc;transform:scaleX(1.0034);">MaldaLP</span>
<span class="t" style="left:1093.23px;top:531px;font-size:10.8px;line-height:10.8px;color:#a6a6a6;transform:scaleX(1.1300);">Před 1 měsícem</span>
<span class="t" style="left:454.36px;top:575px;font-size:9.5px;line-height:9.5px;color:#fff;font-weight:700;transform:scaleX(0.9461);">Přijato</span>
<span class="t" style="left:515.28px;top:571px;font-size:15.2px;line-height:15.2px;color:#dcdcdc;-webkit-text-stroke:0.2px #dcdcdc;transform:scaleX(1.1459);">Moderátor - Fremr</span>
<span class="t" style="left:441.61px;top:590px;font-size:13px;line-height:13px;color:#7a22f0;-webkit-text-stroke:0.2px #7a22f0;transform:scaleX(1.1217);">Fremr</span>
<span class="t" style="left:491.54px;top:590px;font-size:13px;line-height:13px;color:#9a9a9a;transform:scaleX(1.0952);">Před 2 měsíci</span>
<span class="t" style="left:953.62px;top:572px;font-size:12.8px;line-height:12.8px;color:#a6a6a6;transform:scaleX(1.1841);">Zhlédnutí</span>
<span class="t" style="left:952.58px;top:592px;font-size:12.8px;line-height:12.8px;color:#a6a6a6;transform:scaleX(1.1444);">Příspěvků</span>
<span class="t" style="left:1038.03px;top:572px;font-size:12.8px;line-height:12.8px;color:#d6d6d6;transform:scaleX(1.1022);">26</span>
<span class="t" style="left:1139.01px;top:572px;font-size:15.3px;line-height:15.3px;color:#dcdcdc;transform:scaleX(1.0327);">Fremr</span>
<span class="t" style="left:1106.63px;top:591px;font-size:10.8px;line-height:10.8px;color:#a6a6a6;transform:scaleX(1.1324);">Před 2 měsíci</span>
<span class="t" style="left:442.83px;top:632px;font-size:15.2px;line-height:15.2px;color:#dcdcdc;-webkit-text-stroke:0.2px #dcdcdc;transform:scaleX(1.1214);">žiadosť na pozíciu Buildera</span>
<span class="t" style="left:441.59px;top:649px;font-size:13px;line-height:13px;color:#e6e6e6;-webkit-text-stroke:0.2px #e6e6e6;transform:scaleX(1.1401);">Kukon</span>
<span class="t" style="left:494.34px;top:649px;font-size:13px;line-height:13px;color:#9a9a9a;transform:scaleX(1.0914);">Před 2 měsíci</span>
<span class="t" style="left:953.62px;top:632px;font-size:12.8px;line-height:12.8px;color:#a6a6a6;transform:scaleX(1.1841);">Zhlédnutí</span>
<span class="t" style="left:952.58px;top:652px;font-size:12.8px;line-height:12.8px;color:#a6a6a6;transform:scaleX(1.1444);">Příspěvků</span>
<span class="t" style="left:1038.03px;top:632px;font-size:12.8px;line-height:12.8px;color:#d6d6d6;transform:scaleX(1.1022);">24</span>
<span class="t" style="left:1045.23px;top:652px;font-size:12.8px;line-height:12.8px;color:#d6d6d6;transform:scaleX(1.1343);">2</span>
<span class="t" style="left:1119.46px;top:632px;font-size:15.3px;line-height:15.3px;color:#dcdcdc;transform:scaleX(0.9235);">yCoN_CZ</span>
<span class="t" style="left:1106.63px;top:651px;font-size:10.8px;line-height:10.8px;color:#a6a6a6;transform:scaleX(1.1324);">Před 2 měsíci</span>
<span class="t" style="left:442.83px;top:692px;font-size:15.2px;line-height:15.2px;color:#dcdcdc;-webkit-text-stroke:0.2px #dcdcdc;transform:scaleX(1.1291);">Žádost o členství v Builder Teamu - ItzSuinzyy</span>
<span class="t" style="left:441.66px;top:709px;font-size:13px;line-height:13px;color:#e6e6e6;-webkit-text-stroke:0.2px #e6e6e6;transform:scaleX(1.0818);">ItzSuinzyy</span>
<span class="t" style="left:517.04px;top:709px;font-size:13px;line-height:13px;color:#9a9a9a;transform:scaleX(1.0914);">Před 3 měsíci</span>
<span class="t" style="left:953.62px;top:692px;font-size:12.8px;line-height:12.8px;color:#a6a6a6;transform:scaleX(1.1841);">Zhlédnutí</span>
<span class="t" style="left:952.58px;top:712px;font-size:12.8px;line-height:12.8px;color:#a6a6a6;transform:scaleX(1.1444);">Příspěvků</span>
<span class="t" style="left:1040.56px;top:692px;font-size:12.8px;line-height:12.8px;color:#d6d6d6;transform:scaleX(0.9197);">61</span>
<span class="t" style="left:1111.45px;top:692px;font-size:15.3px;line-height:15.3px;color:#dcdcdc;transform:scaleX(0.9985);">ItzSuinzyy</span>
<span class="t" style="left:1106.43px;top:711px;font-size:10.8px;line-height:10.8px;color:#a6a6a6;transform:scaleX(1.1355);">Před 3 měsíci</span>
<span class="t" style="left:454.36px;top:755px;font-size:9.5px;line-height:9.5px;color:#fff;font-weight:700;transform:scaleX(0.9461);">Přijato</span>
<span class="t" style="left:498.00px;top:751px;font-size:15.2px;line-height:15.2px;color:#dcdcdc;-webkit-text-stroke:0.2px #dcdcdc;transform:scaleX(1.1326);">Builder - Frodoslav</span>
<span class="t" style="left:441.64px;top:770px;font-size:13px;line-height:13px;color:#e6e6e6;-webkit-text-stroke:0.2px #e6e6e6;transform:scaleX(1.0952);">Frodoslav</span>
<span class="t" style="left:514.55px;top:770px;font-size:13px;line-height:13px;color:#9a9a9a;transform:scaleX(1.0862);">Před 5 měsíci</span>
<span class="t" style="left:953.62px;top:752px;font-size:12.8px;line-height:12.8px;color:#a6a6a6;transform:scaleX(1.1841);">Zhlédnutí</span>
<span class="t" style="left:952.58px;top:772px;font-size:12.8px;line-height:12.8px;color:#a6a6a6;transform:scaleX(1.1444);">Příspěvků</span>
<span class="t" style="left:1038.03px;top:752px;font-size:12.8px;line-height:12.8px;color:#d6d6d6;transform:scaleX(1.1022);">63</span>
<span class="t" style="left:1115.06px;top:752px;font-size:15.3px;line-height:15.3px;color:#dcdcdc;transform:scaleX(0.9893);">Frodoslav</span>
<span class="t" style="left:1106.43px;top:771px;font-size:10.8px;line-height:10.8px;color:#a6a6a6;transform:scaleX(1.1355);">Před 5 měsíci</span>
<span class="t" style="left:454.36px;top:815px;font-size:9.5px;line-height:9.5px;color:#fff;font-weight:700;transform:scaleX(0.9461);">Přijato</span>
<span class="t" style="left:497.99px;top:811px;font-size:15.2px;line-height:15.2px;color:#dcdcdc;-webkit-text-stroke:0.2px #dcdcdc;transform:scaleX(1.1378);">Nábor na pozici Buildera</span>
<span class="t" style="left:442.04px;top:830px;font-size:13px;line-height:13px;color:#e6e6e6;-webkit-text-stroke:0.2px #e6e6e6;transform:scaleX(1.0595);">CuzImSkyyyyy</span>
<span class="t" style="left:543.94px;top:830px;font-size:13px;line-height:13px;color:#9a9a9a;transform:scaleX(1.0965);">Před 6 měsíci</span>
<span class="t" style="left:953.62px;top:812px;font-size:12.8px;line-height:12.8px;color:#a6a6a6;transform:scaleX(1.1841);">Zhlédnutí</span>
<span class="t" style="left:952.58px;top:832px;font-size:12.8px;line-height:12.8px;color:#a6a6a6;transform:scaleX(1.1444);">Příspěvků</span>
<span class="t" style="left:1032.77px;top:812px;font-size:12.8px;line-height:12.8px;color:#d6d6d6;transform:scaleX(0.9848);">157</span>
<span class="t" style="left:1045.23px;top:832px;font-size:12.8px;line-height:12.8px;color:#d6d6d6;transform:scaleX(1.1343);">3</span>
<span class="t" style="left:1105.50px;top:812px;font-size:15.3px;line-height:15.3px;color:#dcdcdc;transform:scaleX(0.9601);">SpeedFox_</span>
<span class="t" style="left:1105.73px;top:831px;font-size:10.8px;line-height:10.8px;color:#a6a6a6;transform:scaleX(1.1461);">Před 6 měsíci</span>
<span class="t" style="left:454.36px;top:875px;font-size:9.5px;line-height:9.5px;color:#fff;font-weight:700;transform:scaleX(0.9461);">Přijato</span>
<span class="t" style="left:499.13px;top:871px;font-size:15.2px;line-height:15.2px;color:#dcdcdc;-webkit-text-stroke:0.2px #dcdcdc;transform:scaleX(1.1350);">Žádost o členství v Builder Teamu</span>
<span class="t" style="left:442.74px;top:890px;font-size:13px;line-height:13px;color:#e6e6e6;-webkit-text-stroke:0.2px #e6e6e6;transform:scaleX(1.0575);">zPazkeris</span>
<span class="t" style="left:512.54px;top:890px;font-size:13px;line-height:13px;color:#9a9a9a;transform:scaleX(1.0965);">Před 6 měsíci</span>
<span class="t" style="left:953.62px;top:872px;font-size:12.8px;line-height:12.8px;color:#a6a6a6;transform:scaleX(1.1841);">Zhlédnutí</span>
<span class="t" style="left:952.58px;top:892px;font-size:12.8px;line-height:12.8px;color:#a6a6a6;transform:scaleX(1.1444);">Příspěvků</span>
<span class="t" style="left:1038.54px;top:872px;font-size:12.8px;line-height:12.8px;color:#d6d6d6;transform:scaleX(1.0657);">67</span>
<span class="t" style="left:1118.16px;top:872px;font-size:15.3px;line-height:15.3px;color:#dcdcdc;transform:scaleX(0.9574);">zPazkeris</span>
<span class="t" style="left:1105.73px;top:891px;font-size:10.8px;line-height:10.8px;color:#a6a6a6;transform:scaleX(1.1461);">Před 6 měsíci</span>
<span class="t" style="left:454.36px;top:935px;font-size:9.5px;line-height:9.5px;color:#fff;font-weight:700;transform:scaleX(0.9461);">Přijato</span>
<span class="t" style="left:497.96px;top:931px;font-size:15.2px;line-height:15.2px;color:#dcdcdc;-webkit-text-stroke:0.2px #dcdcdc;transform:scaleX(1.1614);">Builder-BoEliret</span>
<span class="t" style="left:441.62px;top:950px;font-size:13px;line-height:13px;color:#e6e6e6;-webkit-text-stroke:0.2px #e6e6e6;transform:scaleX(1.1141);">BoEliret</span>
<span class="t" style="left:504.25px;top:950px;font-size:13px;line-height:13px;color:#9a9a9a;transform:scaleX(1.0862);">Před 7 měsíci</span>
<span class="t" style="left:953.62px;top:932px;font-size:12.8px;line-height:12.8px;color:#a6a6a6;transform:scaleX(1.1841);">Zhlédnutí</span>
<span class="t" style="left:952.58px;top:952px;font-size:12.8px;line-height:12.8px;color:#a6a6a6;transform:scaleX(1.1444);">Příspěvků</span>
<span class="t" style="left:1038.03px;top:932px;font-size:12.8px;line-height:12.8px;color:#d6d6d6;transform:scaleX(1.1022);">66</span>
<span class="t" style="left:1045.23px;top:952px;font-size:12.8px;line-height:12.8px;color:#d6d6d6;transform:scaleX(1.1343);">2</span>
<span class="t" style="left:1140.26px;top:932px;font-size:15.3px;line-height:15.3px;color:#dcdcdc;transform:scaleX(0.9555);">ZorTik</span>
<span class="t" style="left:1106.43px;top:951px;font-size:10.8px;line-height:10.8px;color:#a6a6a6;transform:scaleX(1.1355);">Před 7 měsíci</span>
<span class="t" style="left:1289.00px;top:203px;font-size:13px;line-height:13px;color:#858585;transform:scaleX(1.1281);">Hledat</span>
<span class="t" style="left:1314.91px;top:258px;font-size:12.5px;line-height:12.5px;color:#7089dd;transform:scaleX(1.2089);">Platformy</span>
<span class="t" style="left:1334.92px;top:302px;font-size:12.6px;line-height:12.6px;color:#86c440;-webkit-text-stroke:0.2px #86c440;transform:scaleX(1.1807);">mc.trenend.eu</span>
<span class="t" style="left:1334.93px;top:346px;font-size:12.6px;line-height:12.6px;color:#dedede;-webkit-text-stroke:0.2px #dedede;transform:scaleX(1.1506);">pe.trenend.eu</span>
<span class="t" style="left:1334.93px;top:390px;font-size:12.6px;line-height:12.6px;color:#dedede;-webkit-text-stroke:0.2px #dedede;transform:scaleX(1.1623);">ts.trenend.eu</span>
<span class="t" style="left:1333.05px;top:434px;font-size:12.6px;line-height:12.6px;color:#dedede;-webkit-text-stroke:0.2px #dedede;transform:scaleX(1.1757);">@trenend.eu</span>
<span class="t" style="left:1333.73px;top:478px;font-size:12.6px;line-height:12.6px;color:#dedede;-webkit-text-stroke:0.2px #dedede;transform:scaleX(1.1928);">Klikni pro připojení</span>
<span class="t" style="left:1314.72px;top:553px;font-size:12.5px;line-height:12.5px;color:#7089dd;transform:scaleX(1.1870);">Online Staff</span>
<span class="t" style="left:1328.55px;top:588px;font-size:12.4px;line-height:12.4px;color:#175c14;transform:scaleX(1.0904);">PepaRak198279</span>
<span class="t" style="left:1329.65px;top:634px;font-size:12.4px;line-height:12.4px;color:#f81414;transform:scaleX(1.0237);">Andy_S_</span>
<span class="t" style="left:1290.25px;top:679px;font-size:13px;line-height:13px;color:#a8a8a8;transform:scaleX(1.0249);">Celkem staff online: 2</span>
<span class="t" style="left:1314.68px;top:738px;font-size:12.5px;line-height:12.5px;color:#7089dd;transform:scaleX(1.1482);">Nejnovější příspěvky</span>
<span class="t" style="left:1328.34px;top:765px;font-size:13.0px;line-height:13.0px;color:#d4d4d4;transform:scaleX(1.0924);">Otázka na hráče, klidně i A-T.</span>
<span class="t" style="left:1329.43px;top:780px;font-size:10.7px;line-height:10.7px;color:#f0f0f0;-webkit-text-stroke:0.2px #f0f0f0;transform:scaleX(1.1321);">PozorNato</span>
<span class="t" style="left:1397.15px;top:780px;font-size:10.7px;line-height:10.7px;color:#a0a0a0;transform:scaleX(1.1789);">Před 16 minutami</span>
<span class="t" style="left:1327.93px;top:811px;font-size:13.0px;line-height:13.0px;color:#d4d4d4;transform:scaleX(1.1002);">KingMasterSK spamer</span>
<span class="t" style="left:1329.43px;top:826px;font-size:10.7px;line-height:10.7px;color:#f0f0f0;-webkit-text-stroke:0.2px #f0f0f0;transform:scaleX(1.1415);">zemiakovy_rozok</span>
<span class="t" style="left:1434.06px;top:826px;font-size:10.7px;line-height:10.7px;color:#a0a0a0;transform:scaleX(1.1405);">Před 27 minu...</span>
<span class="t" style="left:1328.33px;top:857px;font-size:13.0px;line-height:13.0px;color:#d4d4d4;transform:scaleX(1.1075);">scam</span>
<span class="t" style="left:1329.44px;top:872px;font-size:10.7px;line-height:10.7px;color:#f0f0f0;-webkit-text-stroke:0.2px #f0f0f0;transform:scaleX(1.0533);">Torenz___</span>
<span class="t" style="left:1393.15px;top:872px;font-size:10.7px;line-height:10.7px;color:#a0a0a0;transform:scaleX(1.1932);">Před 37 minutami</span>
<span class="t" style="left:1329.03px;top:903px;font-size:13.0px;line-height:13.0px;color:#d4d4d4;transform:scaleX(1.1101);">Zádost o unregister</span>
<span class="t" style="left:1328.72px;top:918px;font-size:10.7px;line-height:10.7px;color:#f0f0f0;-webkit-text-stroke:0.2px #f0f0f0;transform:scaleX(1.1995);">skrlex not found</span>
<span class="t" style="left:1428.85px;top:918px;font-size:10.7px;line-height:10.7px;color:#a0a0a0;transform:scaleX(1.1651);">před 1 hodinou</span>
<span class="t" style="left:1327.95px;top:949px;font-size:13.0px;line-height:13.0px;color:#d4d4d4;transform:scaleX(1.0878);">Končím...jako některé legen...</span>
<span class="t" style="left:1328.72px;top:964px;font-size:10.7px;line-height:10.7px;color:#f0f0f0;-webkit-text-stroke:0.2px #f0f0f0;transform:scaleX(1.1700);">Officialzekzodia</span>
<span class="t" style="left:1426.35px;top:964px;font-size:10.7px;line-height:10.7px;color:#a0a0a0;transform:scaleX(1.1694);">před 1 hodinou</span>
<span class="t" style="left:1315.12px;top:1022px;font-size:12.5px;line-height:12.5px;color:#7089dd;transform:scaleX(1.1736);">Online uživatelů</span>
</body></html>
